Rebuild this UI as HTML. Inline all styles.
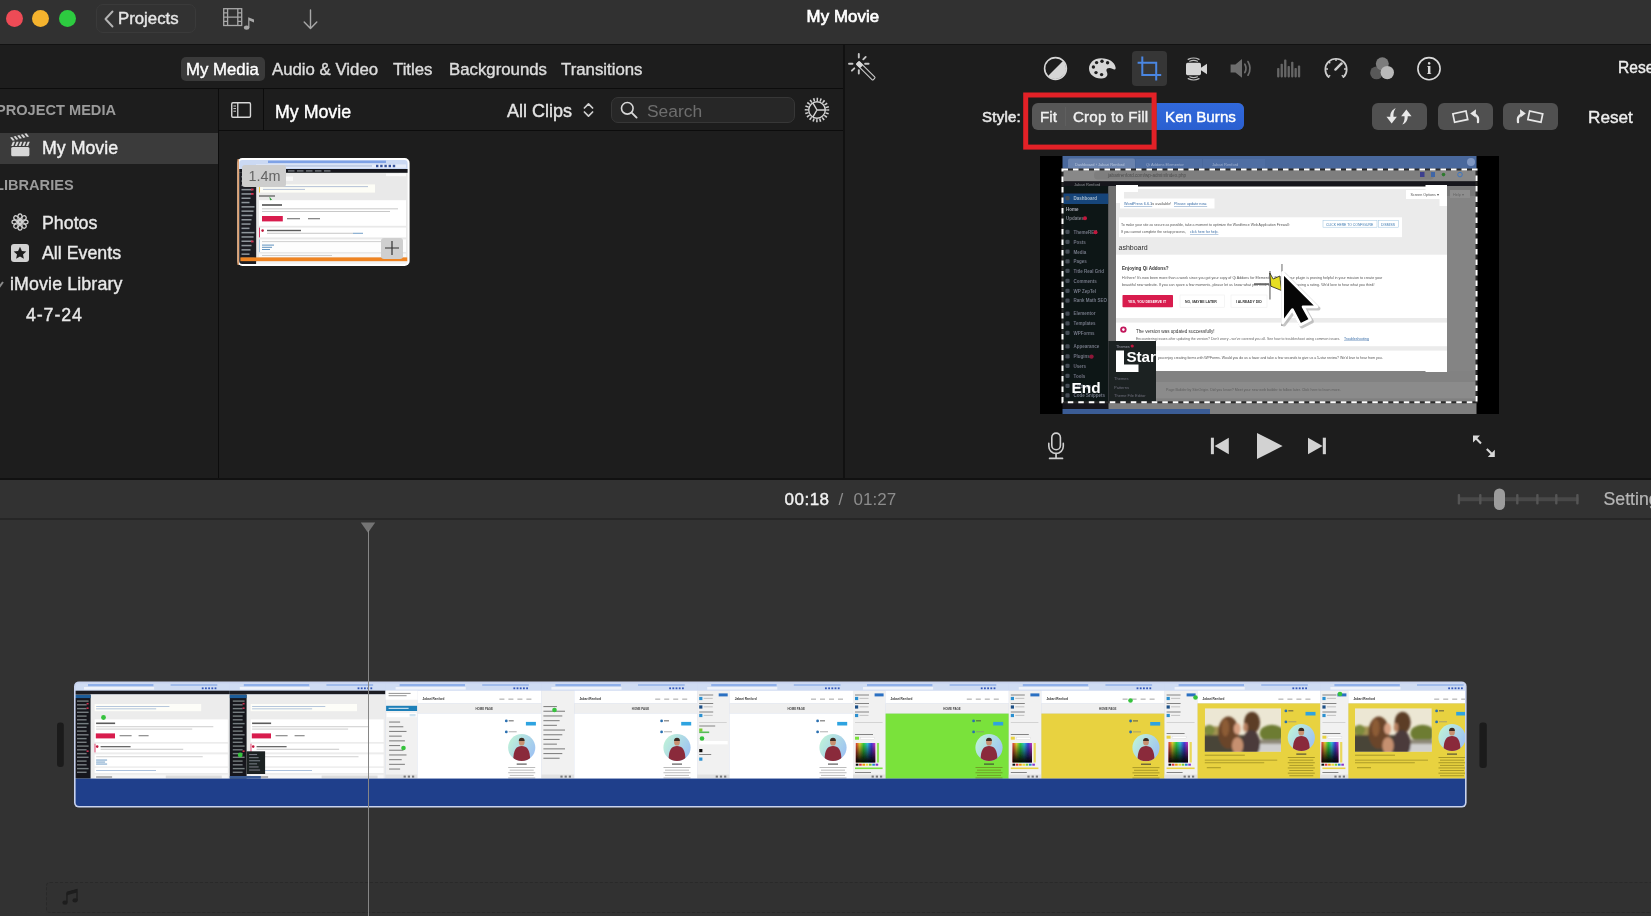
<!DOCTYPE html>
<html lang="en">
<head>
<meta charset="utf-8">
<title>My Movie</title>
<style>
*{box-sizing:border-box;margin:0;padding:0}
html,body{width:1651px;height:916px;overflow:hidden;background:#1d1d1d}
body{font-family:"Liberation Sans",sans-serif;color:#e4e4e4;position:relative;-webkit-font-smoothing:antialiased}
.abs{position:absolute}
.t{-webkit-text-stroke:0.4px currentColor;position:absolute;white-space:nowrap;line-height:1;transform-origin:0 50%}
svg{position:absolute;overflow:visible}
/* regions */
#titlebar{left:0;top:0;width:1651px;height:44px;background:#313131}
#tl{left:0;top:480px;width:1651px;height:436px;background:#323232}
.hl{position:absolute;background:#0c0c0c;height:1px}
.vl{position:absolute;background:#0c0c0c;width:1px}
</style>
</head>
<body>
<div id="root" style="position:absolute;left:0;top:0;width:1651px;height:916px;will-change:transform">
<!-- ===== TITLE BAR ===== -->
<div id="titlebar" class="abs"></div>
<div class="hl" style="left:0;top:43.6px;width:1651px;height:1.4px;background:#121212"></div>

<div class="abs" style="left:5.5px;top:10px;width:17px;height:17px;border-radius:50%;background:#ee4b56"></div>
<div class="abs" style="left:32px;top:10px;width:17px;height:17px;border-radius:50%;background:#f5b32e"></div>
<div class="abs" style="left:59px;top:10px;width:17px;height:17px;border-radius:50%;background:#2dcb40"></div>
<div class="abs" style="left:96px;top:4px;width:100px;height:29px;border-radius:7px;border:1px solid #3a3a3a;background:#323232"></div>
<svg style="left:103px;top:10px" width="12" height="18" viewBox="0 0 12 18"><path d="M9.5 1.5 L2.5 9 L9.5 16.5" fill="none" stroke="#b4b4b4" stroke-width="1.9" stroke-linecap="round" stroke-linejoin="round"/></svg>
<div class="t" id="projects" style="left:118px;top:11px;font-size:16.8px;color:#e6e6e6">Projects</div>
<!-- film + music -->
<svg style="left:223px;top:8px" width="32" height="23" viewBox="0 0 32 23">
 <g fill="none" stroke="#a8a8a8" stroke-width="1.3">
  <rect x="0.7" y="0.7" width="18" height="16.8"/>
  <path d="M4.6 0.7V17.5M14.8 0.7V17.5M4.6 9.1H14.8M0.7 4.9H4.6M0.7 9.1H4.6M0.7 13.3H4.6M14.8 4.9H18.7M14.8 9.1H18.7M14.8 13.3H18.7"/>
 </g>
 <g fill="#a8a8a8"><ellipse cx="23.6" cy="19.6" rx="2.7" ry="2.2"/><path d="M25.2 19.8V9.2L31 11.4V14.6L26.4 12.6V19.8Z"/></g>
</svg>
<svg style="left:303px;top:9px" width="15" height="21" viewBox="0 0 15 21"><path d="M7.5 1V19.3M1.2 13L7.5 19.6L13.8 13" fill="none" stroke="#a8a8a8" stroke-width="1.4" stroke-linecap="round" stroke-linejoin="round"/></svg>
<div class="t" id="wtitle" style="left:806.6px;top:8.5px;font-size:16.8px;color:#fff;-webkit-text-stroke:0.7px #fff;letter-spacing:0.1px">My Movie</div>


<!-- ===== MEDIA TABS ===== -->

<div class="hl" style="left:0;top:88px;width:843px"></div>
<div class="abs" style="left:181px;top:56.5px;width:84px;height:24px;border-radius:5px;background:#3a3a3a"></div>
<div class="t tab" style="left:186px;top:61.5px;font-size:16.8px;color:#fff">My Media</div>
<div class="t tab" style="left:272px;top:61.5px;font-size:16.8px;color:#dcdcdc">Audio &amp; Video</div>
<div class="t tab" style="left:393px;top:61.5px;font-size:16.8px;color:#dcdcdc">Titles</div>
<div class="t tab" style="left:449px;top:61.5px;font-size:16.8px;color:#dcdcdc">Backgrounds</div>
<div class="t tab" style="left:561px;top:61.5px;font-size:16.8px;color:#dcdcdc">Transitions</div>


<!-- ===== SIDEBAR ===== -->

<div class="vl" style="left:218px;top:89px;height:390px"></div>
<div class="t sb" style="left:-4px;top:103.1px;font-size:14.6px;font-weight:bold;color:#9b9b9b;-webkit-text-stroke:0">PROJECT MEDIA</div>
<div class="abs" style="left:0;top:133px;width:218px;height:31px;background:#3b3b3b"></div>
<!-- clapper -->
<svg style="left:11px;top:136px" width="19" height="21" viewBox="0 0 19 21">
 <rect x="0.2" y="11" width="18.2" height="9.2" rx="1.5" fill="#d6d6d6"/>
 <path d="M0.2 10.1L1.9 5.8L4.0 5.8L2.3 10.1ZM3.9 10.1L5.6 5.8L7.7 5.8L6.0 10.1ZM7.6 10.1L9.3 5.8L11.4 5.8L9.7 10.1ZM11.3 10.1L13.0 5.8L15.1 5.8L13.4 10.1ZM15.0 10.1L16.7 5.8L18.8 5.8L17.1 10.1Z" fill="#d6d6d6"/>
 <g transform="rotate(-15 0.2 5.8)"><path d="M0.2 1.4L2.3 1.4L4.0 5.2L1.9 5.2ZM3.9 1.4L6.0 1.4L7.7 5.2L5.6 5.2ZM7.6 1.4L9.7 1.4L11.4 5.2L9.3 5.2ZM11.3 1.4L13.4 1.4L15.1 5.2L13.0 5.2ZM15.0 1.4L17.1 1.4L18.8 5.2L16.7 5.2Z" fill="#d6d6d6"/></g>
</svg>
<div class="t sb" style="left:42px;top:139.8px;font-size:17.8px;color:#f0f0f0">My Movie</div>
<div class="t sb" style="left:-5px;top:177.6px;font-size:14.6px;font-weight:bold;color:#9b9b9b;-webkit-text-stroke:0">LIBRARIES</div>
<!-- photos flower -->
<svg style="left:11.2px;top:212.6px" width="18" height="18" viewBox="-9.5 -9.5 19 19">
 <g fill="none" stroke="#d2d2d2" stroke-width="1.25">
  <ellipse cx="0" cy="-4.9" rx="2.3" ry="3.6"/><ellipse cx="0" cy="-4.9" rx="2.3" ry="3.6" transform="rotate(45)"/>
  <ellipse cx="0" cy="-4.9" rx="2.3" ry="3.6" transform="rotate(90)"/><ellipse cx="0" cy="-4.9" rx="2.3" ry="3.6" transform="rotate(135)"/>
  <ellipse cx="0" cy="-4.9" rx="2.3" ry="3.6" transform="rotate(180)"/><ellipse cx="0" cy="-4.9" rx="2.3" ry="3.6" transform="rotate(225)"/>
  <ellipse cx="0" cy="-4.9" rx="2.3" ry="3.6" transform="rotate(270)"/><ellipse cx="0" cy="-4.9" rx="2.3" ry="3.6" transform="rotate(315)"/>
 </g>
</svg>
<div class="t sb" style="left:42px;top:214.8px;font-size:17.8px;color:#e8e8e8">Photos</div>
<!-- star box -->
<svg style="left:11px;top:244px" width="18" height="18" viewBox="0 0 18 18">
 <rect x="0" y="0" width="18" height="18" rx="3" fill="#d2d2d2"/>
 <path d="M9 2.8l1.9 4.1 4.4.5-3.3 3 .9 4.4L9 12.6l-3.9 2.2.9-4.4-3.3-3 4.4-.5z" fill="#1d1d1d"/>
</svg>
<div class="t sb" style="left:42px;top:245.3px;font-size:17.8px;color:#e8e8e8">All Events</div>
<svg style="left:-3px;top:281px" width="8" height="8" viewBox="0 0 8 8"><path d="M0 1l3 4 3-4" fill="none" stroke="#8a8a8a" stroke-width="2"/></svg>
<div class="t sb" style="left:10px;top:275.8px;font-size:17.8px;color:#e8e8e8;letter-spacing:0.13px">iMovie Library</div>
<div class="t sb" style="left:26px;top:307.1px;font-size:17.8px;color:#e8e8e8;letter-spacing:0.9px">4-7-24</div>


<!-- ===== BROWSER ===== -->

<div class="vl" style="left:263px;top:89px;height:41px"></div>
<div class="hl" style="left:219px;top:130px;width:624px"></div>
<div class="vl" style="left:843px;top:44px;height:436px;width:2px;background:#111"></div>
<svg style="left:231px;top:102px" width="20.4" height="16" viewBox="0 0 22 16" preserveAspectRatio="none">
 <rect x="0.8" y="0.8" width="20.2" height="14.4" rx="1.2" fill="none" stroke="#d8d8d8" stroke-width="1.5"/>
 <path d="M7.3 0.8V15.2" stroke="#d8d8d8" stroke-width="1.4"/>
 <path d="M2.6 4h2.8M2.6 6.6h2.8M2.6 9.2h2.8" stroke="#d8d8d8" stroke-width="1"/>
</svg>
<div class="t" id="bh" style="left:275px;top:103.5px;font-size:17.8px;color:#fff">My Movie</div>
<div class="t" id="allclips" style="left:507px;top:102px;font-size:18px;color:#e4e4e4">All Clips</div>
<svg style="left:583px;top:102px" width="11" height="16" viewBox="0 0 11 16"><path d="M1.4 6L5.5 1.8L9.6 6M1.4 10L5.5 14.2L9.6 10" fill="none" stroke="#d0d0d0" stroke-width="1.7" stroke-linecap="round" stroke-linejoin="round"/></svg>
<div class="abs" style="left:611px;top:97px;width:184px;height:26px;border-radius:7px;background:#272727;border:1px solid #373737"></div>
<svg style="left:620px;top:101px" width="18" height="18" viewBox="0 0 18 18"><circle cx="7.3" cy="7.3" r="5.8" fill="none" stroke="#d8d8d8" stroke-width="1.6"/><path d="M11.6 11.6L16.6 16.6" stroke="#d8d8d8" stroke-width="1.9" stroke-linecap="round"/></svg>
<div class="t" id="search" style="left:647px;top:102.7px;font-size:17.4px;color:#6e6e6e;-webkit-text-stroke:0">Search</div>
<!-- gear -->
<svg style="left:803.5px;top:97px" width="26" height="26" viewBox="-13 -13 26 26">
 <circle r="8.3" fill="none" stroke="#d2d2d2" stroke-width="1.4"/>
 <circle r="10.6" fill="none" stroke="#d2d2d2" stroke-width="3.3" stroke-dasharray="1.499 1.832" transform="rotate(-4)"/>
 <path d="M0 0H8.3M0 0L-4.15 -7.19M0 0L-4.15 7.19" stroke="#d2d2d2" stroke-width="1.4"/>
</svg>
<!-- clip thumbnail -->
<svg id="thumb" style="left:230px;top:150px" width="190" height="125" viewBox="230 150 190 125">
<defs><clipPath id="thc"><rect x="239.2" y="160" width="168.4" height="104" rx="3"/></clipPath><filter id="thb" x="-2%" y="-2%" width="104%" height="104%"><feGaussianBlur stdDeviation="0.35"/></filter></defs>
<rect x="237.4" y="158.0" width="172.2" height="108.0" fill="#fff" rx="5"/><g clip-path="url(#thc)"><g filter="url(#thb)"><rect x="239.0" y="160.0" width="169.0" height="104.0" fill="#e9e9e9" /><rect x="239.0" y="160.0" width="169.0" height="9.0" fill="#cbd9f3" /><rect x="268.0" y="160.6" width="118.0" height="2.4" fill="#7fa2e6" /><rect x="256.0" y="164.4" width="150.0" height="3.4" fill="#e6ecf8" /><rect x="262.0" y="165.2" width="110.0" height="1.5" fill="#b8c6e0" /><rect x="376.0" y="164.8" width="2.4" height="2.4" fill="#35519a" /><rect x="380.2" y="164.8" width="2.4" height="2.4" fill="#35519a" /><rect x="384.4" y="164.8" width="2.4" height="2.4" fill="#35519a" /><rect x="388.6" y="164.8" width="2.4" height="2.4" fill="#35519a" /><rect x="392.8" y="164.8" width="2.4" height="2.4" fill="#35519a" /><rect x="239.0" y="169.0" width="169.0" height="3.8" fill="#14161a" /><rect x="288.0" y="170.2" width="6.5" height="1.4" fill="#8a8f96" opacity="0.8"/><rect x="297.0" y="170.2" width="6.5" height="1.4" fill="#8a8f96" opacity="0.8"/><rect x="306.0" y="170.2" width="6.5" height="1.4" fill="#8a8f96" opacity="0.8"/><rect x="315.0" y="170.2" width="6.5" height="1.4" fill="#8a8f96" opacity="0.8"/><rect x="324.0" y="170.2" width="6.5" height="1.4" fill="#8a8f96" opacity="0.8"/><rect x="239.0" y="172.8" width="17.2" height="92.0" fill="#1b1f24" /><rect x="241.5" y="176.0" width="8.0" height="1.5" fill="#c2c8ce" opacity="0.7"/><rect x="241.5" y="180.3" width="13.0" height="1.5" fill="#c2c8ce" opacity="0.7"/><rect x="241.5" y="184.6" width="12.0" height="1.5" fill="#c2c8ce" opacity="0.7"/><rect x="241.5" y="188.9" width="11.0" height="1.5" fill="#c2c8ce" opacity="0.7"/><rect x="241.5" y="193.2" width="10.0" height="1.5" fill="#c2c8ce" opacity="0.7"/><rect x="241.5" y="197.5" width="9.0" height="1.5" fill="#c2c8ce" opacity="0.7"/><rect x="241.5" y="201.8" width="8.0" height="1.5" fill="#c2c8ce" opacity="0.7"/><rect x="241.5" y="206.1" width="13.0" height="1.5" fill="#c2c8ce" opacity="0.7"/><rect x="241.5" y="210.4" width="12.0" height="1.5" fill="#c2c8ce" opacity="0.7"/><rect x="241.5" y="214.7" width="11.0" height="1.5" fill="#c2c8ce" opacity="0.7"/><rect x="241.5" y="219.0" width="10.0" height="1.5" fill="#c2c8ce" opacity="0.7"/><rect x="241.5" y="223.3" width="9.0" height="1.5" fill="#c2c8ce" opacity="0.7"/><rect x="241.5" y="227.6" width="8.0" height="1.5" fill="#c2c8ce" opacity="0.7"/><rect x="241.5" y="231.9" width="13.0" height="1.5" fill="#c2c8ce" opacity="0.7"/><rect x="241.5" y="236.2" width="12.0" height="1.5" fill="#c2c8ce" opacity="0.7"/><rect x="241.5" y="240.5" width="11.0" height="1.5" fill="#c2c8ce" opacity="0.7"/><rect x="241.5" y="244.8" width="10.0" height="1.5" fill="#c2c8ce" opacity="0.7"/><rect x="241.5" y="249.1" width="9.0" height="1.5" fill="#c2c8ce" opacity="0.7"/><rect x="241.5" y="253.4" width="8.0" height="1.5" fill="#c2c8ce" opacity="0.7"/><rect x="241.5" y="257.7" width="13.0" height="1.5" fill="#c2c8ce" opacity="0.7"/><rect x="251.0" y="188.6" width="2.6" height="1.8" fill="#d03050" /><rect x="251.0" y="193.0" width="2.6" height="1.8" fill="#d03050" /><rect x="251.0" y="240.6" width="2.6" height="1.8" fill="#d03050" /><rect x="386.0" y="173.5" width="20.0" height="2.6" fill="#fafafa" /><rect x="399.0" y="173.5" width="7.0" height="2.6" fill="#fafafa" /><rect x="259.0" y="176.5" width="34.0" height="4.4" fill="#f8f8f8" /><rect x="259.0" y="184.4" width="116.0" height="8.2" fill="#fdfdf6" /><rect x="259.0" y="184.4" width="1.0" height="8.2" fill="#e8c440" /><rect x="263.0" y="186.2" width="105.0" height="0.9" fill="#8aa0c4" opacity="0.7"/><rect x="263.0" y="188.9" width="42.0" height="0.9" fill="#8aa0c4" opacity="0.7"/><rect x="259.0" y="195.0" width="16.0" height="2.0" fill="#555" opacity="0.6"/><path d="M269.4 196.6L270.2 201.4L271.6 200L273 201.2Z" fill="#2e9e3a"/><rect x="259.0" y="200.2" width="147.0" height="25.6" fill="#fff" /><rect x="262.0" y="204.2" width="20.0" height="1.6" fill="#333" opacity="0.85"/><rect x="262.0" y="208.4" width="136.0" height="0.9" fill="#999" opacity="0.6"/><rect x="262.0" y="211.0" width="128.0" height="0.9" fill="#999" opacity="0.6"/><rect x="262.0" y="216.0" width="20.8" height="5.4" fill="#d81a4e" /><rect x="287.0" y="218.0" width="13.0" height="1.3" fill="#555" opacity="0.7"/><rect x="308.0" y="218.0" width="12.0" height="1.3" fill="#555" opacity="0.7"/><rect x="259.0" y="227.6" width="147.0" height="9.8" fill="#fff" /><rect x="259.0" y="227.6" width="0.9" height="9.8" fill="#d81a4e" /><circle cx="262.6" cy="230.6" r="1.3" fill="#c2183c"/><rect x="267.0" y="229.8" width="34.0" height="1.4" fill="#333" opacity="0.8"/><rect x="267.0" y="232.8" width="86.0" height="0.9" fill="#999" opacity="0.6"/><rect x="353.0" y="232.8" width="10.0" height="0.9" fill="#3a78b0" opacity="0.8"/><rect x="259.0" y="239.4" width="147.0" height="12.6" fill="#fdfdfd" /><rect x="259.0" y="239.4" width="0.9" height="12.6" fill="#9cc3df" /><rect x="262.0" y="241.2" width="138.0" height="0.9" fill="#999" opacity="0.5"/><rect x="262.0" y="244.6" width="12.0" height="1.0" fill="#3a78b0" opacity="0.8"/><rect x="262.0" y="246.8" width="10.0" height="1.0" fill="#3a78b0" opacity="0.8"/><rect x="262.0" y="249.0" width="8.0" height="1.0" fill="#3a78b0" opacity="0.8"/><rect x="259.0" y="253.6" width="147.0" height="3.6" fill="#f9f9f9" /><rect x="262.0" y="255.0" width="70.0" height="0.9" fill="#999" opacity="0.5"/><rect x="240.4" y="257.4" width="167.0" height="4.0" fill="#ef8420" /><rect x="239.0" y="261.4" width="17.2" height="3.0" fill="#1b1f24" /><rect x="256.2" y="261.4" width="152.0" height="3.0" fill="#f4f4f4" /></g></g><rect x="237.4" y="159.0" width="1.6" height="106.0" fill="#e2a270" rx="0.8"/>
</svg>
<div class="abs" style="left:242px;top:165px;width:44px;height:22px;border-radius:3px;background:#cdcdcd"></div>
<div class="t" id="dur" style="left:248.5px;top:168.6px;font-size:14.4px;color:#646464;-webkit-text-stroke:0">1.4m</div>
<div class="abs" style="left:381px;top:238px;width:22px;height:21px;border-radius:3px;background:#cfcfcf"></div>
<svg style="left:384px;top:240px" width="16" height="16" viewBox="0 0 16 16"><path d="M8 1V15M1 8H15" stroke="#333" stroke-width="1.2"/></svg>


<!-- ===== VIEWER ===== -->

<!-- wand -->
<svg style="left:840px;top:45px" width="40" height="40" viewBox="0 0 40 40">
 <path d="M18.8 12.5L18.8 9.0M23.3 14.3L25.7 11.9M25.1 18.8L28.6 18.8M18.8 25.1L18.8 28.6M14.3 23.3L11.9 25.7M12.5 18.8L9.0 18.8" stroke="#c6c6c6" stroke-width="1.9" stroke-linecap="round"/>
 <g transform="translate(18.8 18.8) rotate(45)">
  <rect x="-1.5" y="-1.9" width="23" height="3.8" rx="1" fill="none" stroke="#c8c8c8" stroke-width="1.1"/>
  <rect x="-2" y="-2.4" width="6" height="4.8" rx="1" fill="#d8d8d8"/>
 </g>
</svg>
<!-- half circle -->
<svg style="left:1043px;top:56px" width="25" height="25" viewBox="-12.5 -12.5 25 25">
 <circle r="10.9" fill="none" stroke="#d6d6d6" stroke-width="1.6"/>
 <path d="M-7.7 7.7A10.9 10.9 0 0 0 7.7 -7.7Z" fill="#d6d6d6"/>
</svg>
<!-- palette -->
<svg style="left:1088px;top:57px" width="29" height="23" viewBox="0 0 29 23">
 <path d="M13.2 1.2C5.8 1.2 1 6 1 11.6C1 17.2 6.2 21.6 12.6 21.6C16.6 21.6 19.4 19.8 19.4 17.2C19.4 15.4 18.4 14.6 18.4 13.2C18.4 11.8 19.6 11 21.4 11C23.6 11 25.2 12.6 26.4 12.6C27.4 12.6 27.8 11.6 27.6 10.4C26.8 5 20.8 1.2 13.2 1.2Z" fill="#d6d6d6"/>
 <g fill="#1d1d1d"><circle cx="5.4" cy="10" r="1.7"/><circle cx="8.6" cy="5.6" r="1.7"/><circle cx="14" cy="4.2" r="1.7"/><circle cx="19.6" cy="5.8" r="1.7"/><circle cx="8" cy="15.6" r="1.7"/><circle cx="13.6" cy="17.6" r="1.7"/></g>
</svg>
<!-- crop -->
<div class="abs" style="left:1131.5px;top:51px;width:35px;height:35px;border-radius:4px;background:#363636"></div>
<svg style="left:1136px;top:55px" width="27" height="27" viewBox="0 0 27 27">
 <path d="M6.3 1.6V20H25.2M1.6 7.8H20.2V25.6" fill="none" stroke="#4a86e2" stroke-width="2"/>
</svg>
<!-- camera stabilise -->
<svg style="left:1184px;top:55px" width="25" height="28" viewBox="0 0 25 28">
 <rect x="2" y="7.8" width="15" height="12.4" rx="1.6" fill="#d6d6d6"/>
 <path d="M15 14L23 8.8V19.2Z" fill="#d6d6d6"/>
 <path d="M4.2 4.4Q9.6 1.6 15 4.4M5.8 6.3Q9.6 4.6 13.4 6.3M4.2 23.6Q9.6 26.4 15 23.6M5.8 21.8Q9.6 23.4 13.4 21.8" fill="none" stroke="#bdbdbd" stroke-width="1.2" stroke-linecap="round"/>
</svg>
<!-- speaker (dim) -->
<svg style="left:1229px;top:57px" width="27" height="23" viewBox="0 0 27 23">
 <path d="M1.6 7.4H6.4L13 2V20.8L6.4 15.4H1.6Z" fill="#6d6d6d"/>
 <path d="M15.8 7.2Q18.2 11.4 15.8 15.6M19 4.6Q23 11.4 19 18.2" fill="none" stroke="#6d6d6d" stroke-width="1.7" stroke-linecap="round"/>
</svg>
<!-- bars (dim) -->
<svg style="left:1270px;top:50px" width="36" height="32" viewBox="0 0 36 32"><g fill="#666"><rect x="7.1" y="18.0" width="2.3" height="9.4" rx="0.8"/><rect x="10.6" y="13.8" width="2.3" height="13.6" rx="0.8"/><rect x="14.1" y="9.6" width="2.3" height="17.8" rx="0.8"/><rect x="17.6" y="15.9" width="2.3" height="11.5" rx="0.8"/><rect x="21.1" y="11.7" width="2.3" height="15.7" rx="0.8"/><rect x="24.5" y="18.0" width="2.3" height="9.4" rx="0.8"/><rect x="27.9" y="15.6" width="2.3" height="11.8" rx="0.8"/></g></svg>
<!-- speedometer -->
<svg style="left:1323px;top:56px" width="26" height="24" viewBox="-13 -13 26 24">
 <path d="M-7.4 8.2A10.7 10.7 0 1 1 7.4 8.2" fill="none" stroke="#cdcdcd" stroke-width="1.7" stroke-linecap="round"/>
 <path d="M0 -10.6V-8M-10.4 0H-8M10.4 0H8M-7.4 -7.4L-5.8 -5.8M-7.6 7.8L-5.8 6.2M7.6 7.8L5.8 6.2" stroke="#cdcdcd" stroke-width="1.4"/>
 <path d="M-0.6 0.6L5.6 -5.6" stroke="#cdcdcd" stroke-width="2.4" stroke-linecap="round"/>
</svg>
<!-- colour circles -->
<svg style="left:1368px;top:55px" width="30" height="28" viewBox="0 0 30 28">
 <circle cx="8.5" cy="17.9" r="6.4" fill="#585858"/>
 <circle cx="14.3" cy="8.8" r="6.5" fill="#7c7c7c"/>
 <circle cx="19.3" cy="17.6" r="6.7" fill="#b9b9b9"/>
</svg>
<!-- info -->
<svg style="left:1416px;top:56px" width="26" height="26" viewBox="-13 -13 26 26">
 <circle cx="0" cy="-0.3" r="11.1" fill="none" stroke="#dadada" stroke-width="1.6"/>
 <text x="0" y="5.2" text-anchor="middle" font-family="Liberation Serif, serif" font-weight="bold" font-size="17" fill="#dadada">i</text>
</svg>
<div class="t" id="rese" style="left:1618px;top:60px;font-size:15.6px;color:#eee">Reset All</div>
<!-- style row -->
<div class="t" id="stylelbl" style="left:982px;top:109.4px;font-size:15px;letter-spacing:0.25px;color:#e6e6e6;-webkit-text-stroke:0.6px #e6e6e6">Style:</div>
<div class="abs" style="left:1032px;top:103.3px;width:212px;height:26.6px;border-radius:6px;background:#575757"></div>
<div class="abs" style="left:1157px;top:103.3px;width:87px;height:26.6px;border-radius:0 6px 6px 0;background:linear-gradient(#3169dc,#2a5fd0)"></div>
<div class="abs" style="left:1064.5px;top:107px;width:1px;height:19px;background:#5f5f5f"></div>
<div class="t seg" style="left:1040px;top:109px;font-size:15.2px;color:#f0f0f0">Fit</div>
<div class="t seg" style="left:1073px;top:109px;font-size:15.2px;letter-spacing:0.15px;color:#f0f0f0">Crop to Fill</div>
<div class="t seg" style="left:1165px;top:109px;font-size:15.2px;color:#fff">Ken Burns</div>
<svg style="left:1020px;top:90px" width="140" height="62" viewBox="1020 90 140 62"><rect x="1025.7" y="95" width="128.4" height="52.1" fill="none" stroke="#e32127" stroke-width="5"/></svg>
<!-- flip / rotate buttons -->
<div class="abs" style="left:1372px;top:103px;width:55px;height:27px;border-radius:6px;background:#505050"></div>
<div class="abs" style="left:1438px;top:103px;width:55px;height:27px;border-radius:6px;background:#505050"></div>
<div class="abs" style="left:1503px;top:103px;width:55px;height:27px;border-radius:6px;background:#505050"></div>
<svg style="left:1384.2px;top:106.8px" width="31.6" height="19.2" viewBox="0 0 28 17">
 <path d="M10.4 1.2C7 2.4 5.4 5.6 5.6 8.6H2.2L6.8 14.6L11.4 8.6H8.4C8.2 5.6 8.8 3.2 10.4 1.2Z" fill="#e8e8e8"/>
 <path d="M16.2 15.6C19.6 14.4 21.2 11.2 21 8.2H24.4L19.8 2.2L15.2 8.2H18.2C18.4 11.2 17.8 13.6 16.2 15.6Z" fill="#e8e8e8"/>
</svg>
<svg style="left:1451px;top:107px" width="30" height="19" viewBox="0 0 30 19">
 <rect x="2.6" y="5.4" width="13.4" height="8.6" fill="none" stroke="#e8e8e8" stroke-width="1.7" transform="rotate(-12 9.3 9.7)"/>
 <path d="M27 15.2C27.6 11.2 26.4 8.4 23.4 7.2" fill="none" stroke="#e8e8e8" stroke-width="2.3" stroke-linecap="round"/><path d="M19.2 6.6L25 2.2L24.6 10.6Z" fill="#e8e8e8"/>
</svg>
<svg style="left:1515px;top:107px" width="30" height="19" viewBox="0 0 30 19">
 <rect x="13.6" y="5.4" width="13.4" height="8.6" fill="none" stroke="#e8e8e8" stroke-width="1.7" transform="rotate(12 20.3 9.7)"/>
 <path d="M3 15.2C2.4 11.2 3.6 8.4 6.6 7.2" fill="none" stroke="#e8e8e8" stroke-width="2.3" stroke-linecap="round"/><path d="M10.8 6.6L5 2.2L5.4 10.6Z" fill="#e8e8e8"/>
</svg>
<div class="t" id="reset" style="left:1588px;top:108.5px;font-size:17.2px;color:#eee">Reset</div>

<svg id="vimg" style="left:1040px;top:156px" width="459" height="258" viewBox="1040 156 459 258" font-family="Liberation Sans, sans-serif">
 <defs><clipPath id="vclip"><rect x="1062.5" y="156" width="414" height="258"/></clipPath><clipPath id="inclip"><rect x="1116" y="186" width="331" height="185"/></clipPath>
 <filter id="bl" x="-5%" y="-5%" width="110%" height="110%"><feGaussianBlur stdDeviation="0.45"/></filter></defs>
 <rect x="1040" y="156" width="459" height="258" fill="#000"/>
 <g clip-path="url(#vclip)" filter="url(#bl)">
  <!-- dimmed base page -->
  <rect x="1062" y="156" width="415" height="258" fill="#848484"/>
  <rect x="1062" y="156" width="415" height="13.5" fill="#4a679c"/>
  <rect x="1068" y="158.5" width="67" height="11" rx="2" fill="#6a83ae"/>
  <rect x="1136" y="159" width="66" height="9" fill="#506ea3"/><rect x="1203" y="159" width="62" height="9" fill="#506ea3"/>
  <text x="1075" y="165.5" font-size="4" fill="#b8c6dd">Dashboard ‹ Jabari Renford</text>
  <text x="1146" y="165.5" font-size="4" fill="#9db0d0">Qi Addons Elementor</text><text x="1212" y="165.5" font-size="4" fill="#9db0d0">Jabari Renford</text>
  <circle cx="1471" cy="162" r="4" fill="#7f97c2"/>
  <rect x="1062" y="169.5" width="415" height="12" fill="#888"/>
  <rect x="1094" y="171" width="340" height="8.6" rx="4" fill="#7e7e7e"/>
  <text x="1108" y="177.4" font-size="4.6" fill="#4e4e4e">jabarirenford.com/wp-admin/index.php</text>
  <rect x="1420" y="172" width="4.5" height="5" fill="#3c3f8e"/><rect x="1431" y="172" width="4" height="5" fill="#3f66a6"/><circle cx="1443.5" cy="174.6" r="1.8" fill="#2e7a2e"/><circle cx="1460" cy="174.6" r="2.3" fill="none" stroke="#3f76c0" stroke-width="1"/>
  <rect x="1062" y="181.2" width="415" height="5.2" fill="#15171a"/>
  <text x="1074" y="185.6" font-size="4" fill="#8c9096">Jabari Renford</text>
  <!-- WP side menu -->
  <rect x="1062" y="186" width="46.5" height="228" fill="#0f1216"/>
  <rect x="1062" y="193.5" width="46.5" height="10.5" fill="#17457a"/>
  <rect x="1065.4" y="196.1" width="4.2" height="4.2" rx="1.2" fill="#454d55"/><text x="1073.5" y="200.0" font-size="4.5" fill="#a9bccd" font-weight="bold">Dashboard</text><text x="1066" y="211.3" font-size="4.5" fill="#aab1b8" font-weight="bold">Home</text><text x="1066" y="219.7" font-size="4.5" fill="#7c838a" font-weight="bold">Updates</text><rect x="1065.4" y="229.8" width="4.2" height="4.2" rx="1.2" fill="#454d55"/><text x="1073.5" y="233.7" font-size="4.5" fill="#717b85" font-weight="bold">ThemeREX</text><rect x="1065.4" y="239.8" width="4.2" height="4.2" rx="1.2" fill="#454d55"/><text x="1073.5" y="243.7" font-size="4.5" fill="#717b85" font-weight="bold">Posts</text><rect x="1065.4" y="249.6" width="4.2" height="4.2" rx="1.2" fill="#454d55"/><text x="1073.5" y="253.5" font-size="4.5" fill="#717b85" font-weight="bold">Media</text><rect x="1065.4" y="259.3" width="4.2" height="4.2" rx="1.2" fill="#454d55"/><text x="1073.5" y="263.2" font-size="4.5" fill="#717b85" font-weight="bold">Pages</text><rect x="1065.4" y="268.8" width="4.2" height="4.2" rx="1.2" fill="#454d55"/><text x="1073.5" y="272.7" font-size="4.5" fill="#717b85" font-weight="bold">Title Real Grid</text><rect x="1065.4" y="278.8" width="4.2" height="4.2" rx="1.2" fill="#454d55"/><text x="1073.5" y="282.7" font-size="4.5" fill="#717b85" font-weight="bold">Comments</text><rect x="1065.4" y="288.8" width="4.2" height="4.2" rx="1.2" fill="#454d55"/><text x="1073.5" y="292.7" font-size="4.5" fill="#717b85" font-weight="bold">WP ZepTel</text><rect x="1065.4" y="298.5" width="4.2" height="4.2" rx="1.2" fill="#454d55"/><text x="1073.5" y="302.4" font-size="4.5" fill="#717b85" font-weight="bold">Rank Math SEO</text><rect x="1065.4" y="311.5" width="4.2" height="4.2" rx="1.2" fill="#454d55"/><text x="1073.5" y="315.4" font-size="4.5" fill="#717b85" font-weight="bold">Elementor</text><rect x="1065.4" y="321.2" width="4.2" height="4.2" rx="1.2" fill="#454d55"/><text x="1073.5" y="325.1" font-size="4.5" fill="#717b85" font-weight="bold">Templates</text><rect x="1065.4" y="330.8" width="4.2" height="4.2" rx="1.2" fill="#454d55"/><text x="1073.5" y="334.7" font-size="4.5" fill="#717b85" font-weight="bold">WPForms</text><rect x="1065.4" y="344.3" width="4.2" height="4.2" rx="1.2" fill="#454d55"/><text x="1073.5" y="348.2" font-size="4.5" fill="#717b85" font-weight="bold">Appearance</text><rect x="1065.4" y="354.3" width="4.2" height="4.2" rx="1.2" fill="#454d55"/><text x="1073.5" y="358.2" font-size="4.5" fill="#717b85" font-weight="bold">Plugins</text><rect x="1065.4" y="363.8" width="4.2" height="4.2" rx="1.2" fill="#454d55"/><text x="1073.5" y="367.7" font-size="4.5" fill="#717b85" font-weight="bold">Users</text><rect x="1065.4" y="373.8" width="4.2" height="4.2" rx="1.2" fill="#454d55"/><text x="1073.5" y="377.7" font-size="4.5" fill="#717b85" font-weight="bold">Tools</text><rect x="1065.4" y="383.8" width="4.2" height="4.2" rx="1.2" fill="#454d55"/><text x="1073.5" y="387.7" font-size="4.5" fill="#717b85" font-weight="bold">Settings</text><rect x="1065.4" y="393.3" width="4.2" height="4.2" rx="1.2" fill="#454d55"/><text x="1073.5" y="397.2" font-size="4.5" fill="#717b85" font-weight="bold">Code Snippets</text>
  <circle cx="1085" cy="218.3" r="2" fill="#c2183c"/><circle cx="1095.5" cy="232.2" r="2" fill="#c2183c"/><circle cx="1091.5" cy="356.6" r="2.2" fill="#8e1538"/>
  <!-- gap strip + popup -->
  <rect x="1108.5" y="186" width="7.5" height="155" fill="#6e6e6e"/>
  <rect x="1108.5" y="341" width="47.5" height="62" fill="#1d2024"/>
  <text x="1114" y="379.5" font-size="4" fill="#6c7178">Themes</text><text x="1114" y="388.5" font-size="4" fill="#6c7178">Patterns</text><text x="1114" y="396.5" font-size="4" fill="#6c7178">Theme File Editor</text>
  <!-- dimmed area right/below -->
  <rect x="1447" y="186" width="30" height="10" fill="#787878"/>
  <rect x="1450" y="190" width="20" height="8" fill="#8e8e8e"/><text x="1453" y="196" font-size="3.8" fill="#666">Help ▾</text>
  <rect x="1156" y="371" width="321" height="12" fill="#828282"/>
  <rect x="1156" y="382" width="321" height="16.5" fill="#8b8b8b"/>
  <rect x="1156" y="398.5" width="321" height="4" fill="#808080"/>
  <text x="1166" y="391" font-size="3.6" fill="#5d5d5d">Page Builder by SiteOrigin. Did you know? Meet your new web builder to follow later. Click here to learn more.</text>
  <rect x="1062" y="402.5" width="415" height="11.5" fill="#7e7e7e"/>
  <rect x="1062" y="402.5" width="46.5" height="11.5" fill="#15181c"/>
  <rect x="1062" y="409" width="148" height="5" fill="#3b5c95"/>
  <!-- bright inner (Start frame) -->
  <g clip-path="url(#inclip)">
   <rect x="1116" y="186" width="331" height="185" fill="#ebebeb"/>
   <rect x="1116" y="185" width="331" height="1.8" fill="#0a0a0a"/>
   <rect x="1120" y="198.5" width="94.5" height="10" fill="#fff"/>
   <text x="1124" y="205.4" font-size="3.8" fill="#3a6ea8" text-decoration="underline">WordPress 6.6.1</text><text x="1151.5" y="205.4" font-size="3.8" fill="#555">is available!</text><text x="1174" y="205.4" font-size="3.8" fill="#3a6ea8" text-decoration="underline">Please update now.</text>
   <rect x="1119" y="217.3" width="283" height="19.8" fill="#fff"/>
   <text x="1121" y="225.6" font-size="3.5" fill="#555">To make your site as secure as possible, take a moment to optimize the Wordfence Web Application Firewall:</text>
   <rect x="1323" y="220.6" width="54" height="6.6" fill="#fff" stroke="#9cc3df" stroke-width="0.5"/><text x="1326" y="225.6" font-size="3.4" fill="#3a78b0">CLICK HERE TO CONFIGURE</text>
   <rect x="1378.5" y="220.6" width="20" height="6.6" fill="#fff" stroke="#9cc3df" stroke-width="0.5"/><text x="1381" y="225.6" font-size="3.4" fill="#3a78b0">DISMISS</text>
   <text x="1121" y="233" font-size="3.5" fill="#555">If you cannot complete the setup process,</text><text x="1190" y="233" font-size="3.5" fill="#3a6ea8" text-decoration="underline">click here for help.</text>
   <rect x="1406" y="190" width="34" height="9" fill="#fff"/><text x="1410.5" y="196.2" font-size="3.7" fill="#555">Screen Options ▾</text>
   <text x="1118.5" y="250" font-size="7" fill="#2c2c2c">ashboard</text>
   <rect x="1116" y="254.7" width="331" height="63.3" fill="#fff"/>
   <text x="1122" y="270.3" font-size="4.6" font-weight="bold" fill="#333">Enjoying Qi Addons?</text>
   <text x="1122" y="279.4" font-size="3.65" fill="#555">Hi there! It's now been more than a week since you got your copy of Qi Addons for Elementor. We hope our plugin is proving helpful in your mission to create your</text>
   <text x="1122" y="286.2" font-size="3.65" fill="#555">beautiful new website. If you can spare a few moments, please let us know what you think of Qi Addons by leaving a rating. We'd love to hear what you think!</text>
   <rect x="1122.5" y="295" width="50.5" height="12.2" rx="0.8" fill="#d81a4e"/>
   <text x="1128" y="303" font-size="3.5" font-weight="bold" fill="#fff">YES, YOU DESERVE IT</text>
   <rect x="1180" y="295" width="44.5" height="12.2" fill="#fff" stroke="#eee" stroke-width="0.6"/><text x="1185" y="303" font-size="3.5" font-weight="bold" fill="#333">NO, MAYBE LATER</text>
   <rect x="1231" y="295" width="36" height="12.2" fill="#fff" stroke="#eee" stroke-width="0.6"/><text x="1236" y="303" font-size="3.5" font-weight="bold" fill="#333">I ALREADY DID</text>
   <text x="1461" y="264" font-size="4" fill="#666">×</text>
   <rect x="1116" y="322.6" width="331" height="23.6" fill="#fff"/>
   <circle cx="1123.4" cy="329.6" r="3.2" fill="#c2185b"/><circle cx="1123.4" cy="329.6" r="1.3" fill="#fff"/>
   <text x="1136" y="332.6" font-size="4.6" fill="#333">The version was updated successfully!</text>
   <text x="1136" y="339.6" font-size="3.5" fill="#666">Encountering issues after updating the version? Don't worry - we've covered you all. See how to troubleshoot using common issues.</text><text x="1344" y="339.6" font-size="3.5" fill="#3a6ea8" text-decoration="underline">Troubleshooting</text>
   <rect x="1116" y="350.6" width="331" height="21" fill="#fff"/>
   <text x="1158" y="358.6" font-size="3.5" fill="#555">you enjoy creating forms with WPForms. Would you do us a favor and take a few seconds to give us a 5-star review? We'd love to hear from you.</text>
  </g>
  <rect x="1116" y="341" width="40" height="30" fill="#1d2024"/>
  <text x="1116" y="347.6" font-size="3.8" fill="#9a9ea4">Themes</text><circle cx="1132.2" cy="346" r="1.6" fill="#c2183c"/>
  <!-- vertical marks & yellow bit near cursor -->
  <rect x="1269.2" y="271" width="1.5" height="28.5" fill="#8a8a8a"/><rect x="1281.2" y="264" width="1.5" height="62" fill="#9c9c9c"/>
  <rect x="1254" y="283.2" width="15" height="1.8" fill="#6a6a6a"/>
  <path d="M1269.8 273L1273.2 279L1279.8 276L1281.5 290.5L1270.8 286.2Z" fill="#e6de20" stroke="#222" stroke-width="0.8"/>
 </g>
 <!-- Start-frame top line and corner handles -->
 <rect x="1137" y="186.6" width="289" height="2.3" fill="#fff"/>
 <path d="M1116 185H1138V192H1124V203H1116Z" fill="#fff"/>
 <path d="M1447 185H1425.5V192H1439.5V206H1447Z" fill="#fff"/>
 <path d="M1116 372H1138.5V364.5H1124V350.5H1116Z" fill="#fff"/>
 <path d="M1447 372H1425.5V369.6H1447Z" fill="#fff"/>
 <text x="1126.4" y="362.2" font-size="15.2" font-weight="bold" fill="#fff" clip-path="none">Star</text>
 
 <text x="1071.6" y="392.6" font-size="15.4" font-weight="bold" fill="#fff">End</text>
 <!-- dashed End frame -->
 <rect x="1062.5" y="169.5" width="414" height="232.8" fill="none" stroke="#2a2a2a" stroke-width="2"/>
 <rect x="1062.5" y="169.5" width="414" height="232.8" fill="none" stroke="#fff" stroke-width="2" stroke-dasharray="5.5 5"/>
 <!-- cursor -->
 <g transform="translate(1282.6 272.4) scale(3.16)">
  <path d="M0 0V16L3.1 11.8L5.6 16.6L8.8 15L6.5 10.9H10.9Z" fill="#999" transform="translate(0.5 0.55)" opacity="0.55" stroke="#999" stroke-width="1.2" stroke-linejoin="round"/>
  <path d="M0 0V16L3.1 11.8L5.6 16.6L8.8 15L6.5 10.9H10.9Z" fill="#060606" stroke="#fff" stroke-width="0.9" stroke-linejoin="round"/>
 </g>
</svg>

<!-- mic -->
<svg style="left:1046px;top:430px" width="20" height="32" viewBox="1046 430 20 32">
 <rect x="1051.8" y="433.1" width="8.6" height="16.7" rx="4.3" fill="none" stroke="#cfcfcf" stroke-width="1.6"/>
 <path d="M1048.8 443.4V446.2A7.25 7.25 0 0 0 1063.3 446.2V443.4" fill="none" stroke="#cfcfcf" stroke-width="1.6" stroke-linecap="round"/>
 <path d="M1056.05 453.4V458.2M1049.6 458.4H1062.5" stroke="#cfcfcf" stroke-width="1.7" stroke-linecap="round"/>
</svg>
<!-- transport -->
<svg style="left:1205px;top:430px" width="126" height="32" viewBox="1205 430 126 32" fill="#d2d2d2">
 <rect x="1210.9" y="437.7" width="3" height="16.5"/><path d="M1214.6 446L1228.8 437.7V454.3Z"/>
 <path d="M1257 433V459L1282.6 446Z"/>
 <path d="M1308 437.7V454.3L1322.6 446Z"/><rect x="1322.8" y="437.7" width="3.1" height="16.5"/>
</svg>
<!-- fullscreen -->
<svg style="left:1470px;top:432px" width="28" height="28" viewBox="1470 432 28 28">
 <path d="M1473 435.4H1480L1473 442.6Z M1494.8 457H1487.8L1494.8 449.8Z" fill="#d8d8d8"/>
 <path d="M1475.4 437.8L1481 443.4M1492.4 454.6L1486.8 449" stroke="#d8d8d8" stroke-width="2.1"/>
</svg>


<!-- ===== TIMELINE ===== -->
<div id="tl" class="abs"></div>

<div class="hl" style="left:0;top:478px;width:1651px;height:2px;background:#111"></div>
<div class="hl" style="left:0;top:518px;width:1651px;height:1.5px;background:#262626"></div>
<div class="t" id="tc1" style="left:784.5px;top:491.3px;font-size:17px;letter-spacing:0.5px;color:#f2f2f2">00:18</div>
<div class="t" id="tc2" style="left:838.4px;top:491.3px;font-size:17px;color:#8c8c8c;-webkit-text-stroke:0">/</div>
<div class="t" id="tc3" style="left:853.6px;top:491.3px;font-size:17px;color:#8c8c8c;-webkit-text-stroke:0">01:27</div>
<svg style="left:1450px;top:485px" width="135" height="28" viewBox="1450 485 135 28">
 <rect x="1458" y="497.2" width="120.6" height="4" fill="#484848"/>
 <rect x="1457.7" y="494" width="2.4" height="10.4" rx="1" fill="#555"/><rect x="1479.1" y="494" width="2.4" height="10.4" rx="1" fill="#555"/><rect x="1497.6" y="494" width="2.4" height="10.4" rx="1" fill="#555"/><rect x="1516.1" y="494" width="2.4" height="10.4" rx="1" fill="#555"/><rect x="1536.2" y="494" width="2.4" height="10.4" rx="1" fill="#555"/><rect x="1555.1" y="494" width="2.4" height="10.4" rx="1" fill="#555"/><rect x="1576.2" y="494" width="2.4" height="10.4" rx="1" fill="#555"/>
 <rect x="1494" y="488.5" width="11" height="21.5" rx="5.5" fill="#9c9c9c"/>
</svg>
<div class="t" id="settings" style="left:1603.5px;top:491px;font-size:17.7px;color:#b6b6b6;-webkit-text-stroke:0.2px #b6b6b6">Settings</div>

<!--CLIP-START-->
<svg id="clip" style="left:50px;top:676px" width="1450" height="140" viewBox="50 676 1450 140" font-family="Liberation Sans, sans-serif">
<defs><clipPath id="av521"><circle cx="521.7" cy="747.5" r="13.6"/></clipPath><clipPath id="av677"><circle cx="677" cy="747.5" r="13.6"/></clipPath><clipPath id="av833"><circle cx="833" cy="747.5" r="13.6"/></clipPath><clipPath id="av989"><circle cx="989" cy="747.5" r="13.6"/></clipPath><clipPath id="av1146"><circle cx="1146" cy="747.6" r="13.6"/></clipPath><clipPath id="av1301"><circle cx="1301.3" cy="737.5" r="13.6"/></clipPath><clipPath id="av1452"><circle cx="1452" cy="737.5" r="13.6"/></clipPath><clipPath id="ph1204"><rect x="1204.8" y="708.2" width="76.2" height="43.5"/></clipPath><clipPath id="ph1355"><rect x="1355" y="708.2" width="76.8" height="43.5"/></clipPath><linearGradient id="avg" x1="0" y1="0.2" x2="1" y2="0.8"><stop offset="0" stop-color="#bff2d8"/><stop offset="1" stop-color="#9cc0f4"/></linearGradient><linearGradient id="hue" x1="0" y1="0" x2="1" y2="0"><stop offset="0" stop-color="#e03030"/><stop offset="0.2" stop-color="#e0d030"/><stop offset="0.4" stop-color="#30d040"/><stop offset="0.6" stop-color="#30c0d8"/><stop offset="0.8" stop-color="#4040e0"/><stop offset="1" stop-color="#d030c0"/></linearGradient><linearGradient id="blk" x1="0" y1="0" x2="0" y2="1"><stop offset="0" stop-color="#000" stop-opacity="0"/><stop offset="1" stop-color="#000" stop-opacity="1"/></linearGradient><linearGradient id="sky" x1="0" y1="0" x2="1" y2="0.5"><stop offset="0" stop-color="#fbf3d6"/><stop offset="0.5" stop-color="#e6efe6"/><stop offset="1" stop-color="#9ccbe8"/></linearGradient><clipPath id="clipc"><rect x="75.6" y="683" width="1389.4" height="123" rx="3.4"/></clipPath><filter id="pb" x="-10%" y="-10%" width="120%" height="120%"><feGaussianBlur stdDeviation="1.1"/></filter><filter id="tb" x="-1%" y="-5%" width="102%" height="110%"><feGaussianBlur stdDeviation="0.35"/></filter></defs>
<rect x="74" y="681.4" width="1392.6" height="126.2" rx="5" fill="#c9d3ee"/>
<g clip-path="url(#clipc)"><g filter="url(#tb)">
<rect x="74.0" y="683.4" width="155.8" height="7.3" fill="#cfdcf3" /><rect x="88.0" y="684.0" width="65.4" height="2.2" fill="#8fb0ea" /><rect x="170.6" y="684.2" width="46.7" height="1.6" fill="#7fa4e6" opacity="0.7"/><rect x="84.0" y="687.0" width="70.1" height="2.6" fill="#eef2fa" /><rect x="201.8" y="687.4" width="1.8" height="1.8" fill="#3558b8" /><rect x="205.0" y="687.4" width="1.8" height="1.8" fill="#3558b8" /><rect x="208.2" y="687.4" width="1.8" height="1.8" fill="#3558b8" /><rect x="211.4" y="687.4" width="1.8" height="1.8" fill="#3558b8" /><rect x="214.6" y="687.4" width="1.8" height="1.8" fill="#3558b8" /><rect x="74.0" y="690.7" width="155.8" height="3.7" fill="#1b1e23" /><rect x="74.0" y="694.4" width="155.8" height="84.2" fill="#ececec" /><rect x="74.0" y="694.4" width="16.6" height="84.2" fill="#16191d" /><rect x="74.0" y="694.9" width="16.6" height="3.2" fill="#1d5c99" /><rect x="77.0" y="700.4" width="11.6" height="1.4" fill="#aab0b6" opacity="0.65"/><rect x="77.0" y="704.1" width="9.6" height="1.4" fill="#aab0b6" opacity="0.65"/><rect x="77.0" y="707.9" width="9.6" height="1.4" fill="#aab0b6" opacity="0.65"/><rect x="77.0" y="711.6" width="11.6" height="1.4" fill="#aab0b6" opacity="0.65"/><rect x="77.0" y="715.4" width="9.6" height="1.4" fill="#aab0b6" opacity="0.65"/><rect x="77.0" y="719.1" width="9.6" height="1.4" fill="#aab0b6" opacity="0.65"/><rect x="77.0" y="722.9" width="11.6" height="1.4" fill="#aab0b6" opacity="0.65"/><rect x="77.0" y="726.6" width="9.6" height="1.4" fill="#aab0b6" opacity="0.65"/><rect x="77.0" y="730.4" width="9.6" height="1.4" fill="#aab0b6" opacity="0.65"/><rect x="77.0" y="734.1" width="11.6" height="1.4" fill="#aab0b6" opacity="0.65"/><rect x="77.0" y="737.9" width="9.6" height="1.4" fill="#aab0b6" opacity="0.65"/><rect x="77.0" y="741.6" width="9.6" height="1.4" fill="#aab0b6" opacity="0.65"/><rect x="77.0" y="745.4" width="11.6" height="1.4" fill="#aab0b6" opacity="0.65"/><rect x="77.0" y="749.1" width="9.6" height="1.4" fill="#aab0b6" opacity="0.65"/><rect x="77.0" y="752.9" width="9.6" height="1.4" fill="#aab0b6" opacity="0.65"/><rect x="77.0" y="756.6" width="11.6" height="1.4" fill="#aab0b6" opacity="0.65"/><rect x="77.0" y="760.4" width="9.6" height="1.4" fill="#aab0b6" opacity="0.65"/><rect x="77.0" y="764.1" width="9.6" height="1.4" fill="#aab0b6" opacity="0.65"/><rect x="77.0" y="767.9" width="11.6" height="1.4" fill="#aab0b6" opacity="0.65"/><rect x="77.0" y="771.6" width="9.6" height="1.4" fill="#aab0b6" opacity="0.65"/><rect x="86.6" y="702.9" width="2.0" height="1.6" fill="#d03050" /><rect x="86.6" y="707.4" width="2.0" height="1.6" fill="#d03050" /><rect x="86.6" y="750.4" width="2.0" height="1.6" fill="#d03050" /><rect x="94.6" y="704.0" width="106.6" height="7.2" fill="#fdfdf8" /><rect x="96.1" y="706.0" width="73.3" height="0.9" fill="#6c8fbf" opacity="0.55"/><rect x="96.1" y="708.4" width="60.1" height="0.9" fill="#6c8fbf" opacity="0.55"/><rect x="94.6" y="719.4" width="133.2" height="22.6" fill="#fff" /><rect x="96.1" y="722.5" width="19.0" height="1.6" fill="#333" opacity="0.8"/><rect x="96.1" y="726.3" width="117.2" height="0.9" fill="#9a9a9a" opacity="0.55"/><rect x="96.1" y="728.6" width="96.1" height="0.9" fill="#9a9a9a" opacity="0.55"/><rect x="95.8" y="733.4" width="19.2" height="5.0" fill="#d81a4e" /><rect x="119.6" y="735.0" width="12.0" height="1.3" fill="#666" opacity="0.7"/><rect x="138.6" y="735.0" width="10.0" height="1.3" fill="#666" opacity="0.7"/><rect x="94.6" y="743.7" width="133.2" height="8.7" fill="#fff" /><rect x="94.6" y="743.7" width="0.8" height="8.7" fill="#d81a4e" /><circle cx="97.2" cy="746.6" r="1.3" fill="#c2183c"/><rect x="100.6" y="746.0" width="30.0" height="1.3" fill="#444" opacity="0.8"/><rect x="100.6" y="748.8" width="82.6" height="0.9" fill="#999" opacity="0.6"/><rect x="94.6" y="754.4" width="133.2" height="12.0" fill="#fff" /><rect x="96.1" y="756.3" width="106.6" height="0.9" fill="#999" opacity="0.5"/><rect x="96.1" y="759.6" width="11.0" height="0.9" fill="#3a78b0" opacity="0.8"/><rect x="96.1" y="761.6" width="9.0" height="0.9" fill="#3a78b0" opacity="0.8"/><rect x="96.1" y="763.6" width="11.0" height="0.9" fill="#3a78b0" opacity="0.8"/><rect x="94.6" y="767.8" width="133.2" height="5.2" fill="#fff" /><rect x="96.1" y="770.0" width="59.9" height="0.9" fill="#7a9cc8" opacity="0.7"/><rect x="94.6" y="774.6" width="133.2" height="4.0" fill="#f6f6f6" /><rect x="96.1" y="776.4" width="16.0" height="1.2" fill="#555" opacity="0.7"/><rect x="165.8" y="775.6" width="56.0" height="3.0" fill="#dcdcdc" /><circle cx="103.5" cy="717.5" r="2.4" fill="#35c23c"/><rect x="229.8" y="683.4" width="155.8" height="7.3" fill="#cfdcf3" /><rect x="243.8" y="684.0" width="65.4" height="2.2" fill="#8fb0ea" /><rect x="326.4" y="684.2" width="46.7" height="1.6" fill="#7fa4e6" opacity="0.7"/><rect x="239.8" y="687.0" width="70.1" height="2.6" fill="#eef2fa" /><rect x="357.6" y="687.4" width="1.8" height="1.8" fill="#3558b8" /><rect x="360.8" y="687.4" width="1.8" height="1.8" fill="#3558b8" /><rect x="364.0" y="687.4" width="1.8" height="1.8" fill="#3558b8" /><rect x="367.2" y="687.4" width="1.8" height="1.8" fill="#3558b8" /><rect x="370.4" y="687.4" width="1.8" height="1.8" fill="#3558b8" /><rect x="229.8" y="690.7" width="155.8" height="3.7" fill="#1b1e23" /><rect x="229.8" y="694.4" width="155.8" height="84.2" fill="#ececec" /><rect x="229.8" y="694.4" width="16.8" height="84.2" fill="#16191d" /><rect x="229.8" y="694.9" width="16.8" height="3.2" fill="#1d5c99" /><rect x="232.8" y="700.4" width="11.8" height="1.4" fill="#aab0b6" opacity="0.65"/><rect x="232.8" y="704.1" width="9.8" height="1.4" fill="#aab0b6" opacity="0.65"/><rect x="232.8" y="707.9" width="9.8" height="1.4" fill="#aab0b6" opacity="0.65"/><rect x="232.8" y="711.6" width="11.8" height="1.4" fill="#aab0b6" opacity="0.65"/><rect x="232.8" y="715.4" width="9.8" height="1.4" fill="#aab0b6" opacity="0.65"/><rect x="232.8" y="719.1" width="9.8" height="1.4" fill="#aab0b6" opacity="0.65"/><rect x="232.8" y="722.9" width="11.8" height="1.4" fill="#aab0b6" opacity="0.65"/><rect x="232.8" y="726.6" width="9.8" height="1.4" fill="#aab0b6" opacity="0.65"/><rect x="232.8" y="730.4" width="9.8" height="1.4" fill="#aab0b6" opacity="0.65"/><rect x="232.8" y="734.1" width="11.8" height="1.4" fill="#aab0b6" opacity="0.65"/><rect x="232.8" y="737.9" width="9.8" height="1.4" fill="#aab0b6" opacity="0.65"/><rect x="232.8" y="741.6" width="9.8" height="1.4" fill="#aab0b6" opacity="0.65"/><rect x="232.8" y="745.4" width="11.8" height="1.4" fill="#aab0b6" opacity="0.65"/><rect x="232.8" y="749.1" width="9.8" height="1.4" fill="#aab0b6" opacity="0.65"/><rect x="232.8" y="752.9" width="9.8" height="1.4" fill="#aab0b6" opacity="0.65"/><rect x="232.8" y="756.6" width="11.8" height="1.4" fill="#aab0b6" opacity="0.65"/><rect x="232.8" y="760.4" width="9.8" height="1.4" fill="#aab0b6" opacity="0.65"/><rect x="232.8" y="764.1" width="9.8" height="1.4" fill="#aab0b6" opacity="0.65"/><rect x="232.8" y="767.9" width="11.8" height="1.4" fill="#aab0b6" opacity="0.65"/><rect x="232.8" y="771.6" width="9.8" height="1.4" fill="#aab0b6" opacity="0.65"/><rect x="242.6" y="702.9" width="2.0" height="1.6" fill="#d03050" /><rect x="242.6" y="707.4" width="2.0" height="1.6" fill="#d03050" /><rect x="242.6" y="750.4" width="2.0" height="1.6" fill="#d03050" /><rect x="250.6" y="704.0" width="106.4" height="7.2" fill="#fdfdf8" /><rect x="252.1" y="706.0" width="73.2" height="0.9" fill="#6c8fbf" opacity="0.55"/><rect x="252.1" y="708.4" width="60.0" height="0.9" fill="#6c8fbf" opacity="0.55"/><rect x="250.6" y="719.4" width="133.0" height="22.6" fill="#fff" /><rect x="252.1" y="722.5" width="19.0" height="1.6" fill="#333" opacity="0.8"/><rect x="252.1" y="726.3" width="117.0" height="0.9" fill="#9a9a9a" opacity="0.55"/><rect x="252.1" y="728.6" width="96.0" height="0.9" fill="#9a9a9a" opacity="0.55"/><rect x="251.8" y="733.4" width="19.2" height="5.0" fill="#d81a4e" /><rect x="275.6" y="735.0" width="12.0" height="1.3" fill="#666" opacity="0.7"/><rect x="294.6" y="735.0" width="10.0" height="1.3" fill="#666" opacity="0.7"/><rect x="250.6" y="743.7" width="133.0" height="8.7" fill="#fff" /><rect x="250.6" y="743.7" width="0.8" height="8.7" fill="#d81a4e" /><circle cx="253.2" cy="746.6" r="1.3" fill="#c2183c"/><rect x="256.6" y="746.0" width="30.0" height="1.3" fill="#444" opacity="0.8"/><rect x="256.6" y="748.8" width="82.5" height="0.9" fill="#999" opacity="0.6"/><rect x="250.6" y="754.4" width="133.0" height="12.0" fill="#fff" /><rect x="252.1" y="756.3" width="106.4" height="0.9" fill="#999" opacity="0.5"/><rect x="252.1" y="759.6" width="11.0" height="0.9" fill="#3a78b0" opacity="0.8"/><rect x="252.1" y="761.6" width="9.0" height="0.9" fill="#3a78b0" opacity="0.8"/><rect x="252.1" y="763.6" width="11.0" height="0.9" fill="#3a78b0" opacity="0.8"/><rect x="250.6" y="767.8" width="133.0" height="5.2" fill="#fff" /><rect x="252.1" y="770.0" width="59.9" height="0.9" fill="#7a9cc8" opacity="0.7"/><rect x="250.6" y="774.6" width="133.0" height="4.0" fill="#f6f6f6" /><rect x="252.1" y="776.4" width="16.0" height="1.2" fill="#555" opacity="0.7"/><rect x="321.6" y="775.6" width="56.0" height="3.0" fill="#dcdcdc" /><rect x="246.6" y="751.3" width="18.5" height="22.7" fill="#1d2024" /><rect x="249.1" y="754.0" width="8.0" height="1.1" fill="#9aa0a6" opacity="0.7"/><rect x="249.1" y="757.1" width="9.5" height="1.1" fill="#9aa0a6" opacity="0.7"/><rect x="249.1" y="760.2" width="11.0" height="1.1" fill="#9aa0a6" opacity="0.7"/><rect x="249.1" y="763.3" width="8.0" height="1.1" fill="#9aa0a6" opacity="0.7"/><rect x="249.1" y="766.4" width="9.5" height="1.1" fill="#9aa0a6" opacity="0.7"/><rect x="249.1" y="769.5" width="11.0" height="1.1" fill="#9aa0a6" opacity="0.7"/><rect x="229.8" y="776.0" width="31.0" height="2.6" fill="#3b5c95" /><circle cx="240.2" cy="755" r="2.4" fill="#35c23c"/><rect x="385.6" y="683.4" width="155.8" height="7.3" fill="#cfdcf3" /><rect x="399.6" y="684.0" width="65.4" height="2.2" fill="#8fb0ea" /><rect x="482.2" y="684.2" width="46.7" height="1.6" fill="#7fa4e6" opacity="0.7"/><rect x="395.6" y="687.0" width="70.1" height="2.6" fill="#eef2fa" /><rect x="513.4" y="687.4" width="1.8" height="1.8" fill="#3558b8" /><rect x="516.6" y="687.4" width="1.8" height="1.8" fill="#3558b8" /><rect x="519.8" y="687.4" width="1.8" height="1.8" fill="#3558b8" /><rect x="523.0" y="687.4" width="1.8" height="1.8" fill="#3558b8" /><rect x="526.2" y="687.4" width="1.8" height="1.8" fill="#3558b8" /><rect x="385.6" y="690.7" width="32.0" height="87.9" fill="#f1f1f1" /><rect x="385.6" y="690.7" width="32.0" height="9.0" fill="#fff" /><rect x="388.6" y="692.9" width="22.0" height="1.0" fill="#666" opacity="0.7"/><rect x="388.6" y="695.2" width="18.0" height="1.0" fill="#666" opacity="0.7"/><rect x="386.1" y="705.8" width="31.0" height="5.2" fill="#1f7fb8" /><rect x="388.6" y="707.8" width="20.0" height="1.1" fill="#fff" opacity="0.8"/><rect x="386.6" y="713.0" width="30.0" height="4.2" fill="#fff" /><rect x="409.6" y="714.0" width="6.0" height="2.4" fill="#cfe3f0" /><rect x="389.1" y="721.5" width="11.0" height="1.1" fill="#555" opacity="0.7"/><rect x="389.1" y="726.2" width="14.2" height="1.1" fill="#555" opacity="0.7"/><rect x="389.1" y="730.9" width="17.4" height="1.1" fill="#555" opacity="0.7"/><rect x="389.1" y="735.6" width="12.6" height="1.1" fill="#555" opacity="0.7"/><rect x="389.1" y="740.3" width="15.8" height="1.1" fill="#555" opacity="0.7"/><rect x="389.1" y="745.0" width="11.0" height="1.1" fill="#555" opacity="0.7"/><rect x="389.1" y="749.7" width="14.2" height="1.1" fill="#555" opacity="0.7"/><rect x="389.1" y="754.4" width="17.4" height="1.1" fill="#555" opacity="0.7"/><rect x="389.1" y="759.1" width="12.6" height="1.1" fill="#555" opacity="0.7"/><rect x="389.1" y="763.8" width="15.8" height="1.1" fill="#555" opacity="0.7"/><rect x="389.1" y="768.5" width="11.0" height="1.1" fill="#555" opacity="0.7"/><rect x="385.6" y="774.6" width="32.0" height="4.0" fill="#e2e2e2" /><rect x="403.6" y="775.6" width="2.2" height="2.0" fill="#777" /><rect x="407.8" y="775.6" width="2.2" height="2.0" fill="#777" /><rect x="412.0" y="775.6" width="2.2" height="2.0" fill="#777" /><rect x="417.6" y="690.7" width="123.8" height="12.7" fill="#fff" /><text x="422.6" y="700.0" font-size="3.1" font-weight="bold" fill="#333">Jabari Renford</text><rect x="499.4" y="698.6" width="5.0" height="1.1" fill="#888" opacity="0.7"/><rect x="508.4" y="698.6" width="5.0" height="1.1" fill="#888" opacity="0.7"/><rect x="517.4" y="698.6" width="5.0" height="1.1" fill="#888" opacity="0.7"/><rect x="526.4" y="698.6" width="5.0" height="1.1" fill="#888" opacity="0.7"/><rect x="417.6" y="703.4" width="123.8" height="10.2" fill="#efefef" /><rect x="417.6" y="713.6" width="123.8" height="65.0" fill="#fff" /><text x="475.5" y="709.8" font-size="2.9" font-weight="bold" fill="#444">HOME PAGE</text><circle cx="506.30000000000007" cy="720.9" r="1.4" fill="#2a6fb0"/><rect x="508.7" y="720.2" width="5.0" height="1.2" fill="#444" opacity="0.7"/><rect x="525.9" y="721.9" width="10.0" height="3.6" fill="#2ea3e0" /><circle cx="506.30000000000007" cy="731.9" r="1.4" fill="#2a6fb0"/><rect x="508.7" y="731.2" width="8.0" height="1.1" fill="#888" opacity="0.6"/><circle cx="521.7" cy="747.5" r="13.6" fill="url(#avg)"/><g clip-path="url(#av521)"><path d="M513.2 761.1 C513.2 749.0 516.7 746.0 521.7 746.0 C526.7 746.0 530.2 749.0 530.2 761.1Z" fill="#8a2c3a"/></g><ellipse cx="521.7" cy="741.9" rx="2.9" ry="3.6" fill="#c89070"/><path d="M518.8000000000001 741.0A2.9 3.2 0 0 1 524.6 741.0Z" fill="#3a2a20"/><rect x="516.7" y="763.5" width="10.0" height="1.2" fill="#333" opacity="0.8"/><rect x="508.2" y="767.1" width="27.0" height="0.9" fill="#777" opacity="0.55"/><rect x="509.7" y="769.7" width="24.0" height="0.9" fill="#777" opacity="0.55"/><rect x="508.2" y="772.3" width="27.0" height="0.9" fill="#777" opacity="0.55"/><rect x="509.7" y="774.9" width="24.0" height="0.9" fill="#777" opacity="0.55"/><rect x="508.2" y="777.5" width="27.0" height="0.9" fill="#777" opacity="0.55"/><circle cx="403.5" cy="748" r="2.3" fill="#35c23c"/><rect x="541.4" y="683.4" width="155.8" height="7.3" fill="#cfdcf3" /><rect x="555.4" y="684.0" width="65.4" height="2.2" fill="#8fb0ea" /><rect x="638.0" y="684.2" width="46.7" height="1.6" fill="#7fa4e6" opacity="0.7"/><rect x="551.4" y="687.0" width="70.1" height="2.6" fill="#eef2fa" /><rect x="669.2" y="687.4" width="1.8" height="1.8" fill="#3558b8" /><rect x="672.4" y="687.4" width="1.8" height="1.8" fill="#3558b8" /><rect x="675.6" y="687.4" width="1.8" height="1.8" fill="#3558b8" /><rect x="678.8" y="687.4" width="1.8" height="1.8" fill="#3558b8" /><rect x="682.0" y="687.4" width="1.8" height="1.8" fill="#3558b8" /><rect x="541.4" y="690.7" width="33.0" height="87.9" fill="#f1f1f1" /><rect x="543.4" y="706.0" width="13.5" height="1.1" fill="#555" opacity="0.7"/><rect x="543.4" y="710.7" width="21.6" height="1.1" fill="#555" opacity="0.7"/><rect x="543.4" y="715.4" width="18.9" height="1.1" fill="#555" opacity="0.7"/><rect x="543.4" y="720.1" width="16.2" height="1.1" fill="#555" opacity="0.7"/><rect x="543.4" y="724.8" width="13.5" height="1.1" fill="#555" opacity="0.7"/><rect x="543.4" y="729.5" width="21.6" height="1.1" fill="#555" opacity="0.7"/><rect x="543.4" y="734.2" width="18.9" height="1.1" fill="#555" opacity="0.7"/><rect x="543.4" y="738.9" width="16.2" height="1.1" fill="#555" opacity="0.7"/><rect x="543.4" y="743.6" width="13.5" height="1.1" fill="#555" opacity="0.7"/><rect x="543.4" y="748.3" width="21.6" height="1.1" fill="#555" opacity="0.7"/><rect x="543.4" y="753.0" width="18.9" height="1.1" fill="#555" opacity="0.7"/><rect x="543.4" y="757.7" width="16.2" height="1.1" fill="#555" opacity="0.7"/><rect x="541.4" y="774.6" width="33.0" height="4.0" fill="#e2e2e2" /><rect x="560.4" y="775.6" width="2.2" height="2.0" fill="#777" /><rect x="564.6" y="775.6" width="2.2" height="2.0" fill="#777" /><rect x="568.8" y="775.6" width="2.2" height="2.0" fill="#777" /><rect x="574.4" y="690.7" width="122.8" height="12.7" fill="#fff" /><text x="579.4" y="700.0" font-size="3.1" font-weight="bold" fill="#333">Jabari Renford</text><rect x="655.2" y="698.6" width="5.0" height="1.1" fill="#888" opacity="0.7"/><rect x="664.2" y="698.6" width="5.0" height="1.1" fill="#888" opacity="0.7"/><rect x="673.2" y="698.6" width="5.0" height="1.1" fill="#888" opacity="0.7"/><rect x="682.2" y="698.6" width="5.0" height="1.1" fill="#888" opacity="0.7"/><rect x="574.4" y="703.4" width="122.8" height="10.2" fill="#efefef" /><rect x="574.4" y="713.6" width="122.8" height="65.0" fill="#fff" /><text x="631.8" y="709.8" font-size="2.9" font-weight="bold" fill="#444">HOME PAGE</text><circle cx="661.6" cy="720.9" r="1.4" fill="#2a6fb0"/><rect x="664.0" y="720.2" width="5.0" height="1.2" fill="#444" opacity="0.7"/><rect x="681.2" y="721.9" width="10.0" height="3.6" fill="#2ea3e0" /><circle cx="661.6" cy="731.9" r="1.4" fill="#2a6fb0"/><rect x="664.0" y="731.2" width="8.0" height="1.1" fill="#888" opacity="0.6"/><circle cx="677" cy="747.5" r="13.6" fill="url(#avg)"/><g clip-path="url(#av677)"><path d="M668.5 761.1 C668.5 749.0 672 746.0 677 746.0 C682 746.0 685.5 749.0 685.5 761.1Z" fill="#8a2c3a"/></g><ellipse cx="677" cy="741.9" rx="2.9" ry="3.6" fill="#c89070"/><path d="M674.1 741.0A2.9 3.2 0 0 1 679.9 741.0Z" fill="#3a2a20"/><rect x="672.0" y="763.5" width="10.0" height="1.2" fill="#333" opacity="0.8"/><rect x="663.5" y="767.1" width="27.0" height="0.9" fill="#777" opacity="0.55"/><rect x="665.0" y="769.7" width="24.0" height="0.9" fill="#777" opacity="0.55"/><rect x="663.5" y="772.3" width="27.0" height="0.9" fill="#777" opacity="0.55"/><rect x="665.0" y="774.9" width="24.0" height="0.9" fill="#777" opacity="0.55"/><rect x="663.5" y="777.5" width="27.0" height="0.9" fill="#777" opacity="0.55"/><circle cx="554.5" cy="710" r="2.3" fill="#35c23c"/><rect x="697.2" y="683.4" width="155.8" height="7.3" fill="#cfdcf3" /><rect x="711.2" y="684.0" width="65.4" height="2.2" fill="#8fb0ea" /><rect x="793.8" y="684.2" width="46.7" height="1.6" fill="#7fa4e6" opacity="0.7"/><rect x="707.2" y="687.0" width="70.1" height="2.6" fill="#eef2fa" /><rect x="825.0" y="687.4" width="1.8" height="1.8" fill="#3558b8" /><rect x="828.2" y="687.4" width="1.8" height="1.8" fill="#3558b8" /><rect x="831.4" y="687.4" width="1.8" height="1.8" fill="#3558b8" /><rect x="834.6" y="687.4" width="1.8" height="1.8" fill="#3558b8" /><rect x="837.8" y="687.4" width="1.8" height="1.8" fill="#3558b8" /><rect x="697.2" y="690.7" width="32.5" height="87.9" fill="#f1f1f1" /><rect x="699.2" y="694.5" width="14.0" height="1.0" fill="#555" opacity="0.7"/><rect x="699.2" y="696.9" width="3.2" height="3.2" fill="#2a8fd0" /><rect x="703.7" y="697.9" width="9.0" height="0.9" fill="#999" opacity="0.6"/><rect x="699.2" y="703.0" width="14.0" height="1.0" fill="#555" opacity="0.7"/><rect x="699.2" y="705.4" width="3.2" height="3.2" fill="#1c4f86" /><rect x="703.7" y="706.4" width="9.0" height="0.9" fill="#999" opacity="0.6"/><rect x="699.2" y="711.5" width="14.0" height="1.0" fill="#555" opacity="0.7"/><rect x="699.2" y="713.9" width="3.2" height="3.2" fill="#2a8fd0" /><rect x="703.7" y="714.9" width="9.0" height="0.9" fill="#999" opacity="0.6"/><rect x="699.2" y="722.0" width="27.5" height="0.8" fill="#ccc" /><rect x="718.7" y="693.4" width="9.0" height="3.0" fill="#2b6fc2" /><rect x="699.2" y="725.5" width="16.0" height="1.0" fill="#555" opacity="0.7"/><rect x="699.2" y="728.5" width="3.2" height="3.2" fill="#7c3" /><rect x="699.2" y="731.5" width="10.0" height="1.6" fill="#5b5" /><rect x="699.2" y="741.0" width="28.5" height="3.4" fill="#fff" /><rect x="699.2" y="749.0" width="3.2" height="3.2" fill="#111" /><rect x="699.2" y="757.5" width="3.2" height="3.2" fill="#2a8fd0" /><rect x="699.2" y="754.0" width="12.0" height="1.0" fill="#555" opacity="0.7"/><rect x="697.2" y="774.6" width="32.5" height="4.0" fill="#e2e2e2" /><rect x="715.7" y="775.6" width="2.2" height="2.0" fill="#777" /><rect x="719.9" y="775.6" width="2.2" height="2.0" fill="#777" /><rect x="724.1" y="775.6" width="2.2" height="2.0" fill="#777" /><rect x="729.7" y="690.7" width="123.3" height="12.7" fill="#fff" /><text x="734.7" y="700.0" font-size="3.1" font-weight="bold" fill="#333">Jabari Renford</text><rect x="811.0" y="698.6" width="5.0" height="1.1" fill="#888" opacity="0.7"/><rect x="820.0" y="698.6" width="5.0" height="1.1" fill="#888" opacity="0.7"/><rect x="829.0" y="698.6" width="5.0" height="1.1" fill="#888" opacity="0.7"/><rect x="838.0" y="698.6" width="5.0" height="1.1" fill="#888" opacity="0.7"/><rect x="729.7" y="703.4" width="123.3" height="10.2" fill="#efefef" /><rect x="729.7" y="713.6" width="123.3" height="65.0" fill="#fff" /><text x="787.4" y="709.8" font-size="2.9" font-weight="bold" fill="#444">HOME PAGE</text><circle cx="817.6" cy="720.9" r="1.4" fill="#2a6fb0"/><rect x="820.0" y="720.2" width="5.0" height="1.2" fill="#444" opacity="0.7"/><rect x="837.2" y="721.9" width="10.0" height="3.6" fill="#2ea3e0" /><circle cx="817.6" cy="731.9" r="1.4" fill="#2a6fb0"/><rect x="820.0" y="731.2" width="8.0" height="1.1" fill="#888" opacity="0.6"/><circle cx="833" cy="747.5" r="13.6" fill="url(#avg)"/><g clip-path="url(#av833)"><path d="M824.5 761.1 C824.5 749.0 828 746.0 833 746.0 C838 746.0 841.5 749.0 841.5 761.1Z" fill="#8a2c3a"/></g><ellipse cx="833" cy="741.9" rx="2.9" ry="3.6" fill="#c89070"/><path d="M830.1 741.0A2.9 3.2 0 0 1 835.9 741.0Z" fill="#3a2a20"/><rect x="828.0" y="763.5" width="10.0" height="1.2" fill="#333" opacity="0.8"/><rect x="819.5" y="767.1" width="27.0" height="0.9" fill="#777" opacity="0.55"/><rect x="821.0" y="769.7" width="24.0" height="0.9" fill="#777" opacity="0.55"/><rect x="819.5" y="772.3" width="27.0" height="0.9" fill="#777" opacity="0.55"/><rect x="821.0" y="774.9" width="24.0" height="0.9" fill="#777" opacity="0.55"/><rect x="819.5" y="777.5" width="27.0" height="0.9" fill="#777" opacity="0.55"/><circle cx="702" cy="738.5" r="2.3" fill="#35c23c"/><rect x="853.0" y="683.4" width="155.8" height="7.3" fill="#cfdcf3" /><rect x="867.0" y="684.0" width="65.4" height="2.2" fill="#8fb0ea" /><rect x="949.6" y="684.2" width="46.7" height="1.6" fill="#7fa4e6" opacity="0.7"/><rect x="863.0" y="687.0" width="70.1" height="2.6" fill="#eef2fa" /><rect x="980.8" y="687.4" width="1.8" height="1.8" fill="#3558b8" /><rect x="984.0" y="687.4" width="1.8" height="1.8" fill="#3558b8" /><rect x="987.2" y="687.4" width="1.8" height="1.8" fill="#3558b8" /><rect x="990.4" y="687.4" width="1.8" height="1.8" fill="#3558b8" /><rect x="993.6" y="687.4" width="1.8" height="1.8" fill="#3558b8" /><rect x="853.0" y="690.7" width="32.6" height="87.9" fill="#f1f1f1" /><rect x="855.0" y="694.5" width="14.0" height="1.0" fill="#555" opacity="0.7"/><rect x="855.0" y="696.9" width="3.2" height="3.2" fill="#2a8fd0" /><rect x="859.5" y="697.9" width="9.0" height="0.9" fill="#999" opacity="0.6"/><rect x="855.0" y="703.0" width="14.0" height="1.0" fill="#555" opacity="0.7"/><rect x="855.0" y="705.4" width="3.2" height="3.2" fill="#1c4f86" /><rect x="859.5" y="706.4" width="9.0" height="0.9" fill="#999" opacity="0.6"/><rect x="855.0" y="711.5" width="14.0" height="1.0" fill="#555" opacity="0.7"/><rect x="855.0" y="713.9" width="3.2" height="3.2" fill="#2a8fd0" /><rect x="859.5" y="714.9" width="9.0" height="0.9" fill="#999" opacity="0.6"/><rect x="855.0" y="722.0" width="27.6" height="0.8" fill="#ccc" /><rect x="874.6" y="693.4" width="9.0" height="3.0" fill="#2b6fc2" /><rect x="855.0" y="734.0" width="18.0" height="1.0" fill="#555" opacity="0.7"/><rect x="855.0" y="736.7" width="4.0" height="3.0" fill="#7ae23a" /><rect x="860.5" y="737.4" width="14.0" height="2.0" fill="#fff" stroke="#ccc" stroke-width="0.3"/><rect x="855.8" y="743.0" width="19.5" height="19.5" fill="url(#hue)" /><rect x="855.8" y="743.0" width="19.5" height="19.5" fill="url(#blk)" /><rect x="876.9" y="743.0" width="2.2" height="19.5" fill="#7ae23a" opacity="0.85"/><rect x="855.8" y="763.7" width="2.6" height="2.0" fill="#111" /><rect x="859.1" y="763.7" width="2.6" height="2.0" fill="#d33" /><rect x="862.4" y="763.7" width="2.6" height="2.0" fill="#e90" /><rect x="865.7" y="763.7" width="2.6" height="2.0" fill="#ed3" /><rect x="869.0" y="763.7" width="2.6" height="2.0" fill="#7c3" /><rect x="872.3" y="763.7" width="2.6" height="2.0" fill="#28c" /><rect x="875.6" y="763.7" width="2.6" height="2.0" fill="#83c" /><rect x="855.0" y="767.5" width="27.6" height="1.6" fill="#7ae23a" /><rect x="855.0" y="772.0" width="16.0" height="1.0" fill="#555" opacity="0.7"/><rect x="853.0" y="774.6" width="32.6" height="4.0" fill="#e2e2e2" /><rect x="871.6" y="775.6" width="2.2" height="2.0" fill="#777" /><rect x="875.8" y="775.6" width="2.2" height="2.0" fill="#777" /><rect x="880.0" y="775.6" width="2.2" height="2.0" fill="#777" /><rect x="885.6" y="690.7" width="123.2" height="12.7" fill="#fff" /><text x="890.6" y="700.0" font-size="3.1" font-weight="bold" fill="#333">Jabari Renford</text><rect x="966.8" y="698.6" width="5.0" height="1.1" fill="#888" opacity="0.7"/><rect x="975.8" y="698.6" width="5.0" height="1.1" fill="#888" opacity="0.7"/><rect x="984.8" y="698.6" width="5.0" height="1.1" fill="#888" opacity="0.7"/><rect x="993.8" y="698.6" width="5.0" height="1.1" fill="#888" opacity="0.7"/><rect x="885.6" y="703.4" width="123.2" height="10.2" fill="#efefef" /><rect x="885.6" y="713.6" width="123.2" height="65.0" fill="#7ae23a" /><text x="943.2" y="709.8" font-size="2.9" font-weight="bold" fill="#444">HOME PAGE</text><circle cx="973.6" cy="720.9" r="1.4" fill="#2a6fb0"/><rect x="976.0" y="720.2" width="5.0" height="1.2" fill="#444" opacity="0.7"/><rect x="993.2" y="721.9" width="10.0" height="3.6" fill="#2ea3e0" /><circle cx="973.6" cy="731.9" r="1.4" fill="#2a6fb0"/><rect x="976.0" y="731.2" width="8.0" height="1.1" fill="#888" opacity="0.6"/><circle cx="989" cy="747.5" r="13.6" fill="url(#avg)"/><g clip-path="url(#av989)"><path d="M980.5 761.1 C980.5 749.0 984 746.0 989 746.0 C994 746.0 997.5 749.0 997.5 761.1Z" fill="#8a2c3a"/></g><ellipse cx="989" cy="741.9" rx="2.9" ry="3.6" fill="#c89070"/><path d="M986.1 741.0A2.9 3.2 0 0 1 991.9 741.0Z" fill="#3a2a20"/><rect x="984.0" y="763.5" width="10.0" height="1.2" fill="#333" opacity="0.8"/><rect x="975.5" y="767.1" width="27.0" height="0.9" fill="#6a5f10" opacity="0.55"/><rect x="977.0" y="769.7" width="24.0" height="0.9" fill="#6a5f10" opacity="0.55"/><rect x="975.5" y="772.3" width="27.0" height="0.9" fill="#6a5f10" opacity="0.55"/><rect x="977.0" y="774.9" width="24.0" height="0.9" fill="#6a5f10" opacity="0.55"/><rect x="975.5" y="777.5" width="27.0" height="0.9" fill="#6a5f10" opacity="0.55"/><rect x="1008.8" y="683.4" width="155.8" height="7.3" fill="#cfdcf3" /><rect x="1022.8" y="684.0" width="65.4" height="2.2" fill="#8fb0ea" /><rect x="1105.4" y="684.2" width="46.7" height="1.6" fill="#7fa4e6" opacity="0.7"/><rect x="1018.8" y="687.0" width="70.1" height="2.6" fill="#eef2fa" /><rect x="1136.6" y="687.4" width="1.8" height="1.8" fill="#3558b8" /><rect x="1139.8" y="687.4" width="1.8" height="1.8" fill="#3558b8" /><rect x="1143.0" y="687.4" width="1.8" height="1.8" fill="#3558b8" /><rect x="1146.2" y="687.4" width="1.8" height="1.8" fill="#3558b8" /><rect x="1149.4" y="687.4" width="1.8" height="1.8" fill="#3558b8" /><rect x="1008.8" y="690.7" width="32.6" height="87.9" fill="#f1f1f1" /><rect x="1010.8" y="694.5" width="14.0" height="1.0" fill="#555" opacity="0.7"/><rect x="1010.8" y="696.9" width="3.2" height="3.2" fill="#2a8fd0" /><rect x="1015.3" y="697.9" width="9.0" height="0.9" fill="#999" opacity="0.6"/><rect x="1010.8" y="703.0" width="14.0" height="1.0" fill="#555" opacity="0.7"/><rect x="1010.8" y="705.4" width="3.2" height="3.2" fill="#1c4f86" /><rect x="1015.3" y="706.4" width="9.0" height="0.9" fill="#999" opacity="0.6"/><rect x="1010.8" y="711.5" width="14.0" height="1.0" fill="#555" opacity="0.7"/><rect x="1010.8" y="713.9" width="3.2" height="3.2" fill="#2a8fd0" /><rect x="1015.3" y="714.9" width="9.0" height="0.9" fill="#999" opacity="0.6"/><rect x="1010.8" y="722.0" width="27.6" height="0.8" fill="#ccc" /><rect x="1030.4" y="693.4" width="9.0" height="3.0" fill="#2b6fc2" /><rect x="1010.8" y="734.0" width="18.0" height="1.0" fill="#555" opacity="0.7"/><rect x="1010.8" y="736.7" width="4.0" height="3.0" fill="#e8d23f" /><rect x="1016.3" y="737.4" width="14.0" height="2.0" fill="#fff" stroke="#ccc" stroke-width="0.3"/><rect x="1012.5" y="743.0" width="19.5" height="19.5" fill="url(#hue)" /><rect x="1012.5" y="743.0" width="19.5" height="19.5" fill="url(#blk)" /><rect x="1033.6" y="743.0" width="2.2" height="19.5" fill="#e8d23f" opacity="0.85"/><rect x="1012.5" y="763.7" width="2.6" height="2.0" fill="#111" /><rect x="1015.8" y="763.7" width="2.6" height="2.0" fill="#d33" /><rect x="1019.1" y="763.7" width="2.6" height="2.0" fill="#e90" /><rect x="1022.4" y="763.7" width="2.6" height="2.0" fill="#ed3" /><rect x="1025.7" y="763.7" width="2.6" height="2.0" fill="#7c3" /><rect x="1029.0" y="763.7" width="2.6" height="2.0" fill="#28c" /><rect x="1032.3" y="763.7" width="2.6" height="2.0" fill="#83c" /><rect x="1010.8" y="767.5" width="27.6" height="1.6" fill="#e8d23f" /><rect x="1010.8" y="772.0" width="16.0" height="1.0" fill="#555" opacity="0.7"/><rect x="1008.8" y="774.6" width="32.6" height="4.0" fill="#e2e2e2" /><rect x="1027.4" y="775.6" width="2.2" height="2.0" fill="#777" /><rect x="1031.6" y="775.6" width="2.2" height="2.0" fill="#777" /><rect x="1035.8" y="775.6" width="2.2" height="2.0" fill="#777" /><rect x="1041.4" y="690.7" width="123.2" height="12.7" fill="#fff" /><text x="1046.4" y="700.0" font-size="3.1" font-weight="bold" fill="#333">Jabari Renford</text><rect x="1122.6" y="698.6" width="5.0" height="1.1" fill="#888" opacity="0.7"/><rect x="1131.6" y="698.6" width="5.0" height="1.1" fill="#888" opacity="0.7"/><rect x="1140.6" y="698.6" width="5.0" height="1.1" fill="#888" opacity="0.7"/><rect x="1149.6" y="698.6" width="5.0" height="1.1" fill="#888" opacity="0.7"/><rect x="1041.4" y="703.4" width="123.2" height="10.2" fill="#efefef" /><rect x="1041.4" y="713.6" width="123.2" height="65.0" fill="#e8d23f" /><text x="1099.0" y="709.8" font-size="2.9" font-weight="bold" fill="#444">HOME PAGE</text><circle cx="1130.6" cy="721.0" r="1.4" fill="#2a6fb0"/><rect x="1133.0" y="720.3" width="5.0" height="1.2" fill="#444" opacity="0.7"/><rect x="1150.2" y="722.0" width="10.0" height="3.6" fill="#2ea3e0" /><circle cx="1130.6" cy="732.0" r="1.4" fill="#2a6fb0"/><rect x="1133.0" y="731.3" width="8.0" height="1.1" fill="#888" opacity="0.6"/><circle cx="1146" cy="747.6" r="13.6" fill="url(#avg)"/><g clip-path="url(#av1146)"><path d="M1137.5 761.2 C1137.5 749.1 1141 746.1 1146 746.1 C1151 746.1 1154.5 749.1 1154.5 761.2Z" fill="#8a2c3a"/></g><ellipse cx="1146" cy="742.0" rx="2.9" ry="3.6" fill="#c89070"/><path d="M1143.1 741.1A2.9 3.2 0 0 1 1148.9 741.1Z" fill="#3a2a20"/><rect x="1141.0" y="763.6" width="10.0" height="1.2" fill="#333" opacity="0.8"/><rect x="1132.5" y="767.2" width="27.0" height="0.9" fill="#6a5f10" opacity="0.55"/><rect x="1134.0" y="769.8" width="24.0" height="0.9" fill="#6a5f10" opacity="0.55"/><rect x="1132.5" y="772.4" width="27.0" height="0.9" fill="#6a5f10" opacity="0.55"/><rect x="1134.0" y="775.0" width="24.0" height="0.9" fill="#6a5f10" opacity="0.55"/><rect x="1132.5" y="777.6" width="27.0" height="0.9" fill="#6a5f10" opacity="0.55"/><circle cx="1130.5" cy="700.5" r="2.3" fill="#35c23c"/><rect x="1164.6" y="683.4" width="155.8" height="7.3" fill="#cfdcf3" /><rect x="1178.6" y="684.0" width="65.4" height="2.2" fill="#8fb0ea" /><rect x="1261.2" y="684.2" width="46.7" height="1.6" fill="#7fa4e6" opacity="0.7"/><rect x="1174.6" y="687.0" width="70.1" height="2.6" fill="#eef2fa" /><rect x="1292.4" y="687.4" width="1.8" height="1.8" fill="#3558b8" /><rect x="1295.6" y="687.4" width="1.8" height="1.8" fill="#3558b8" /><rect x="1298.8" y="687.4" width="1.8" height="1.8" fill="#3558b8" /><rect x="1302.0" y="687.4" width="1.8" height="1.8" fill="#3558b8" /><rect x="1305.2" y="687.4" width="1.8" height="1.8" fill="#3558b8" /><rect x="1164.6" y="690.7" width="33.0" height="87.9" fill="#f1f1f1" /><rect x="1166.6" y="694.5" width="14.0" height="1.0" fill="#555" opacity="0.7"/><rect x="1166.6" y="696.9" width="3.2" height="3.2" fill="#2a8fd0" /><rect x="1171.1" y="697.9" width="9.0" height="0.9" fill="#999" opacity="0.6"/><rect x="1166.6" y="703.0" width="14.0" height="1.0" fill="#555" opacity="0.7"/><rect x="1166.6" y="705.4" width="3.2" height="3.2" fill="#1c4f86" /><rect x="1171.1" y="706.4" width="9.0" height="0.9" fill="#999" opacity="0.6"/><rect x="1166.6" y="711.5" width="14.0" height="1.0" fill="#555" opacity="0.7"/><rect x="1166.6" y="713.9" width="3.2" height="3.2" fill="#2a8fd0" /><rect x="1171.1" y="714.9" width="9.0" height="0.9" fill="#999" opacity="0.6"/><rect x="1166.6" y="722.0" width="28.0" height="0.8" fill="#ccc" /><rect x="1186.6" y="693.4" width="9.0" height="3.0" fill="#2b6fc2" /><rect x="1166.6" y="733.0" width="18.0" height="1.0" fill="#555" opacity="0.7"/><rect x="1166.6" y="735.7" width="4.0" height="3.0" fill="#e8d23f" /><rect x="1172.1" y="736.4" width="14.0" height="2.0" fill="#fff" stroke="#ccc" stroke-width="0.3"/><rect x="1168.5" y="742.0" width="19.5" height="20.5" fill="url(#hue)" /><rect x="1168.5" y="742.0" width="19.5" height="20.5" fill="url(#blk)" /><rect x="1189.6" y="742.0" width="2.2" height="20.5" fill="#e8d23f" opacity="0.85"/><rect x="1168.5" y="763.7" width="2.6" height="2.0" fill="#111" /><rect x="1171.8" y="763.7" width="2.6" height="2.0" fill="#d33" /><rect x="1175.1" y="763.7" width="2.6" height="2.0" fill="#e90" /><rect x="1178.4" y="763.7" width="2.6" height="2.0" fill="#ed3" /><rect x="1181.7" y="763.7" width="2.6" height="2.0" fill="#7c3" /><rect x="1185.0" y="763.7" width="2.6" height="2.0" fill="#28c" /><rect x="1188.3" y="763.7" width="2.6" height="2.0" fill="#83c" /><rect x="1166.6" y="767.5" width="28.0" height="1.6" fill="#e8d23f" /><rect x="1166.6" y="772.0" width="16.0" height="1.0" fill="#555" opacity="0.7"/><rect x="1164.6" y="774.6" width="33.0" height="4.0" fill="#e2e2e2" /><rect x="1183.6" y="775.6" width="2.2" height="2.0" fill="#777" /><rect x="1187.8" y="775.6" width="2.2" height="2.0" fill="#777" /><rect x="1192.0" y="775.6" width="2.2" height="2.0" fill="#777" /><rect x="1197.6" y="690.7" width="122.8" height="12.7" fill="#fff" /><text x="1202.6" y="700.0" font-size="3.1" font-weight="bold" fill="#333">Jabari Renford</text><rect x="1278.4" y="698.6" width="5.0" height="1.1" fill="#888" opacity="0.7"/><rect x="1287.4" y="698.6" width="5.0" height="1.1" fill="#888" opacity="0.7"/><rect x="1296.4" y="698.6" width="5.0" height="1.1" fill="#888" opacity="0.7"/><rect x="1305.4" y="698.6" width="5.0" height="1.1" fill="#888" opacity="0.7"/><rect x="1197.6" y="703.4" width="122.8" height="75.2" fill="#e8d23f" /><circle cx="1285.8999999999999" cy="710.9" r="1.4" fill="#2a6fb0"/><rect x="1288.3" y="710.2" width="5.0" height="1.2" fill="#444" opacity="0.7"/><rect x="1305.5" y="711.9" width="10.0" height="3.6" fill="#2ea3e0" /><circle cx="1285.8999999999999" cy="721.9" r="1.4" fill="#2a6fb0"/><rect x="1288.3" y="721.2" width="8.0" height="1.1" fill="#888" opacity="0.6"/><circle cx="1301.3" cy="737.5" r="13.6" fill="url(#avg)"/><g clip-path="url(#av1301)"><path d="M1292.8 751.1 C1292.8 739.0 1296.3 736.0 1301.3 736.0 C1306.3 736.0 1309.8 739.0 1309.8 751.1Z" fill="#8a2c3a"/></g><ellipse cx="1301.3" cy="731.9" rx="2.9" ry="3.6" fill="#c89070"/><path d="M1298.3999999999999 731.0A2.9 3.2 0 0 1 1304.2 731.0Z" fill="#3a2a20"/><rect x="1296.3" y="753.5" width="10.0" height="1.2" fill="#333" opacity="0.8"/><rect x="1287.8" y="757.1" width="27.0" height="0.9" fill="#6a5f10" opacity="0.55"/><rect x="1289.3" y="759.7" width="24.0" height="0.9" fill="#6a5f10" opacity="0.55"/><rect x="1287.8" y="762.3" width="27.0" height="0.9" fill="#6a5f10" opacity="0.55"/><rect x="1289.3" y="764.9" width="24.0" height="0.9" fill="#6a5f10" opacity="0.55"/><rect x="1287.8" y="767.5" width="27.0" height="0.9" fill="#6a5f10" opacity="0.55"/><rect x="1289.3" y="770.1" width="24.0" height="0.9" fill="#6a5f10" opacity="0.55"/><rect x="1287.8" y="772.7" width="27.0" height="0.9" fill="#6a5f10" opacity="0.55"/><rect x="1289.3" y="775.3" width="24.0" height="0.9" fill="#6a5f10" opacity="0.55"/><g clip-path="url(#ph1204)"><rect x="1204.8" y="708.2" width="76.2" height="43.5" fill="#ece7d4" /><g filter="url(#pb)"><rect x="1202.8" y="726.5" width="18.3" height="9.6" fill="#a39352" /><ellipse cx="1271.856" cy="733.4300000000001" rx="12.192" ry="8.700000000000001" fill="#6d7c33"/><ellipse cx="1209.3719999999998" cy="729.95" rx="5.3340000000000005" ry="5.22" fill="#7d8a3c"/><rect x="1202.8" y="735.2" width="45.7" height="18.3" fill="#4a4438" /><rect x="1246.7" y="739.5" width="38.1" height="5.2" fill="#8f8a7a" /><rect x="1255.1" y="743.9" width="30.5" height="8.7" fill="#cfcfcf" /><ellipse cx="1228.422" cy="732.5600000000001" rx="10.287" ry="16.095" fill="#6b452b"/><ellipse cx="1225.374" cy="727.7750000000001" rx="3.8100000000000005" ry="8.700000000000001" fill="#8c5c36"/><ellipse cx="1252.0439999999999" cy="722.5550000000001" rx="8.001" ry="10.875" fill="#5b3d28"/><ellipse cx="1251.282" cy="743.87" rx="8.763" ry="13.92" fill="#4b3a3a"/><ellipse cx="1237.185" cy="728.6450000000001" rx="3.429" ry="5.655" fill="#d9a283"/><ellipse cx="1237.566" cy="745.61" rx="5.715" ry="8.700000000000001" fill="#c69070"/><ellipse cx="1245.567" cy="727.34" rx="2.286" ry="4.3500000000000005" fill="#b88262"/></g></g><rect x="1204.8" y="754.7" width="40.0" height="1.0" fill="#6a5f10" opacity="0.5"/><rect x="1204.8" y="759.7" width="72.4" height="0.9" fill="#6a5f10" opacity="0.5"/><rect x="1204.8" y="762.3" width="59.4" height="0.9" fill="#6a5f10" opacity="0.5"/><rect x="1206.8" y="767.2" width="14.0" height="1.0" fill="#6a5f10" opacity="0.5"/><circle cx="1195.5" cy="697.5" r="2.3" fill="#35c23c"/><rect x="1320.4" y="683.4" width="155.8" height="7.3" fill="#cfdcf3" /><rect x="1334.4" y="684.0" width="65.4" height="2.2" fill="#8fb0ea" /><rect x="1417.0" y="684.2" width="46.7" height="1.6" fill="#7fa4e6" opacity="0.7"/><rect x="1330.4" y="687.0" width="70.1" height="2.6" fill="#eef2fa" /><rect x="1448.2" y="687.4" width="1.8" height="1.8" fill="#3558b8" /><rect x="1451.4" y="687.4" width="1.8" height="1.8" fill="#3558b8" /><rect x="1454.6" y="687.4" width="1.8" height="1.8" fill="#3558b8" /><rect x="1457.8" y="687.4" width="1.8" height="1.8" fill="#3558b8" /><rect x="1461.0" y="687.4" width="1.8" height="1.8" fill="#3558b8" /><rect x="1320.4" y="690.7" width="28.0" height="87.9" fill="#f1f1f1" /><rect x="1322.4" y="694.5" width="14.0" height="1.0" fill="#555" opacity="0.7"/><rect x="1322.4" y="696.9" width="3.2" height="3.2" fill="#2a8fd0" /><rect x="1326.9" y="697.9" width="9.0" height="0.9" fill="#999" opacity="0.6"/><rect x="1322.4" y="703.0" width="14.0" height="1.0" fill="#555" opacity="0.7"/><rect x="1322.4" y="705.4" width="3.2" height="3.2" fill="#1c4f86" /><rect x="1326.9" y="706.4" width="9.0" height="0.9" fill="#999" opacity="0.6"/><rect x="1322.4" y="711.5" width="14.0" height="1.0" fill="#555" opacity="0.7"/><rect x="1322.4" y="713.9" width="3.2" height="3.2" fill="#2a8fd0" /><rect x="1326.9" y="714.9" width="9.0" height="0.9" fill="#999" opacity="0.6"/><rect x="1322.4" y="722.0" width="23.0" height="0.8" fill="#ccc" /><rect x="1337.4" y="693.4" width="9.0" height="3.0" fill="#2b6fc2" /><rect x="1322.4" y="733.0" width="18.0" height="1.0" fill="#555" opacity="0.7"/><rect x="1322.4" y="735.7" width="4.0" height="3.0" fill="#e8d23f" /><rect x="1327.9" y="736.4" width="14.0" height="2.0" fill="#fff" stroke="#ccc" stroke-width="0.3"/><rect x="1321.5" y="742.0" width="17.0" height="20.5" fill="url(#hue)" /><rect x="1321.5" y="742.0" width="17.0" height="20.5" fill="url(#blk)" /><rect x="1340.1" y="742.0" width="2.2" height="20.5" fill="#e8d23f" opacity="0.85"/><rect x="1321.5" y="763.7" width="2.6" height="2.0" fill="#111" /><rect x="1324.8" y="763.7" width="2.6" height="2.0" fill="#d33" /><rect x="1328.1" y="763.7" width="2.6" height="2.0" fill="#e90" /><rect x="1331.4" y="763.7" width="2.6" height="2.0" fill="#ed3" /><rect x="1334.7" y="763.7" width="2.6" height="2.0" fill="#7c3" /><rect x="1338.0" y="763.7" width="2.6" height="2.0" fill="#28c" /><rect x="1341.3" y="763.7" width="2.6" height="2.0" fill="#83c" /><rect x="1322.4" y="767.5" width="23.0" height="1.6" fill="#e8d23f" /><rect x="1322.4" y="772.0" width="16.0" height="1.0" fill="#555" opacity="0.7"/><rect x="1320.4" y="774.6" width="28.0" height="4.0" fill="#e2e2e2" /><rect x="1334.4" y="775.6" width="2.2" height="2.0" fill="#777" /><rect x="1338.6" y="775.6" width="2.2" height="2.0" fill="#777" /><rect x="1342.8" y="775.6" width="2.2" height="2.0" fill="#777" /><rect x="1348.4" y="690.7" width="127.8" height="12.7" fill="#fff" /><text x="1353.4" y="700.0" font-size="3.1" font-weight="bold" fill="#333">Jabari Renford</text><rect x="1434.2" y="698.6" width="5.0" height="1.1" fill="#888" opacity="0.7"/><rect x="1443.2" y="698.6" width="5.0" height="1.1" fill="#888" opacity="0.7"/><rect x="1452.2" y="698.6" width="5.0" height="1.1" fill="#888" opacity="0.7"/><rect x="1461.2" y="698.6" width="5.0" height="1.1" fill="#888" opacity="0.7"/><rect x="1348.4" y="703.4" width="127.8" height="75.2" fill="#e8d23f" /><circle cx="1436.6" cy="710.9" r="1.4" fill="#2a6fb0"/><rect x="1439.0" y="710.2" width="5.0" height="1.2" fill="#444" opacity="0.7"/><rect x="1456.2" y="711.9" width="10.0" height="3.6" fill="#2ea3e0" /><circle cx="1436.6" cy="721.9" r="1.4" fill="#2a6fb0"/><rect x="1439.0" y="721.2" width="8.0" height="1.1" fill="#888" opacity="0.6"/><circle cx="1452" cy="737.5" r="13.6" fill="url(#avg)"/><g clip-path="url(#av1452)"><path d="M1443.5 751.1 C1443.5 739.0 1447 736.0 1452 736.0 C1457 736.0 1460.5 739.0 1460.5 751.1Z" fill="#8a2c3a"/></g><ellipse cx="1452" cy="731.9" rx="2.9" ry="3.6" fill="#c89070"/><path d="M1449.1 731.0A2.9 3.2 0 0 1 1454.9 731.0Z" fill="#3a2a20"/><rect x="1447.0" y="753.5" width="10.0" height="1.2" fill="#333" opacity="0.8"/><rect x="1438.5" y="757.1" width="27.0" height="0.9" fill="#6a5f10" opacity="0.55"/><rect x="1440.0" y="759.7" width="24.0" height="0.9" fill="#6a5f10" opacity="0.55"/><rect x="1438.5" y="762.3" width="27.0" height="0.9" fill="#6a5f10" opacity="0.55"/><rect x="1440.0" y="764.9" width="24.0" height="0.9" fill="#6a5f10" opacity="0.55"/><rect x="1438.5" y="767.5" width="27.0" height="0.9" fill="#6a5f10" opacity="0.55"/><rect x="1440.0" y="770.1" width="24.0" height="0.9" fill="#6a5f10" opacity="0.55"/><rect x="1438.5" y="772.7" width="27.0" height="0.9" fill="#6a5f10" opacity="0.55"/><rect x="1440.0" y="775.3" width="24.0" height="0.9" fill="#6a5f10" opacity="0.55"/><g clip-path="url(#ph1355)"><rect x="1355.0" y="708.2" width="76.8" height="43.5" fill="#ece7d4" /><g filter="url(#pb)"><rect x="1353.0" y="726.5" width="18.4" height="9.6" fill="#a39352" /><ellipse cx="1422.584" cy="733.4300000000001" rx="12.288" ry="8.700000000000001" fill="#6d7c33"/><ellipse cx="1359.608" cy="729.95" rx="5.376" ry="5.22" fill="#7d8a3c"/><rect x="1353.0" y="735.2" width="46.1" height="18.3" fill="#4a4438" /><rect x="1397.2" y="739.5" width="38.4" height="5.2" fill="#8f8a7a" /><rect x="1405.7" y="743.9" width="30.7" height="8.7" fill="#cfcfcf" /><ellipse cx="1378.808" cy="732.5600000000001" rx="10.368" ry="16.095" fill="#6b452b"/><ellipse cx="1375.736" cy="727.7750000000001" rx="3.84" ry="8.700000000000001" fill="#8c5c36"/><ellipse cx="1402.616" cy="722.5550000000001" rx="8.064" ry="10.875" fill="#5b3d28"/><ellipse cx="1401.848" cy="743.87" rx="8.832" ry="13.92" fill="#4b3a3a"/><ellipse cx="1387.64" cy="728.6450000000001" rx="3.456" ry="5.655" fill="#d9a283"/><ellipse cx="1388.024" cy="745.61" rx="5.76" ry="8.700000000000001" fill="#c69070"/><ellipse cx="1396.088" cy="727.34" rx="2.304" ry="4.3500000000000005" fill="#b88262"/></g></g><rect x="1355.0" y="754.7" width="40.0" height="1.0" fill="#6a5f10" opacity="0.5"/><rect x="1355.0" y="759.7" width="73.0" height="0.9" fill="#6a5f10" opacity="0.5"/><rect x="1355.0" y="762.3" width="59.8" height="0.9" fill="#6a5f10" opacity="0.5"/><rect x="1357.0" y="767.2" width="14.0" height="1.0" fill="#6a5f10" opacity="0.5"/><circle cx="1340" cy="694" r="2.3" fill="#35c23c"/>
</g>
<rect x="74" y="778.6" width="1394" height="29" fill="#1f3f8b"/>
</g>
<rect x="57" y="722.6" width="6.8" height="44.4" rx="3" fill="#1b1b1b"/>
<rect x="1479.4" y="722.6" width="7.4" height="45.4" rx="3" fill="#1b1b1b"/>
</svg>
<!--CLIP-END-->
<!-- music well -->
<div class="abs" style="left:45.5px;top:881.5px;width:1620px;height:31px;border:1px dashed #292929;border-radius:4px;background:#313131"></div>
<svg style="left:61.6px;top:888px" width="16.8" height="18.4" viewBox="0 0 19 20">
 <path d="M5.6 4.6L17 1.4V13.2" fill="none" stroke="#1d1d1d" stroke-width="1.5"/>
 <path d="M5.6 4.6V15.8" stroke="#1d1d1d" stroke-width="1.5"/>
 <path d="M5.6 4.2L17 1V4.6L5.6 7.8Z" fill="#1d1d1d"/>
 <ellipse cx="3.4" cy="16.2" rx="3" ry="2.4" fill="#1d1d1d"/><ellipse cx="14.8" cy="13.6" rx="3" ry="2.4" fill="#1d1d1d"/>
</svg>
<!-- playhead -->
<svg style="left:360px;top:520px" width="16" height="396" viewBox="360 520 16 396">
 <path d="M360.8 522.4H375.2L368 532.8Z" fill="#747474"/>
 <rect x="368" y="530" width="1" height="386" fill="#868686"/>
</svg>

</div>
</body>
</html>
